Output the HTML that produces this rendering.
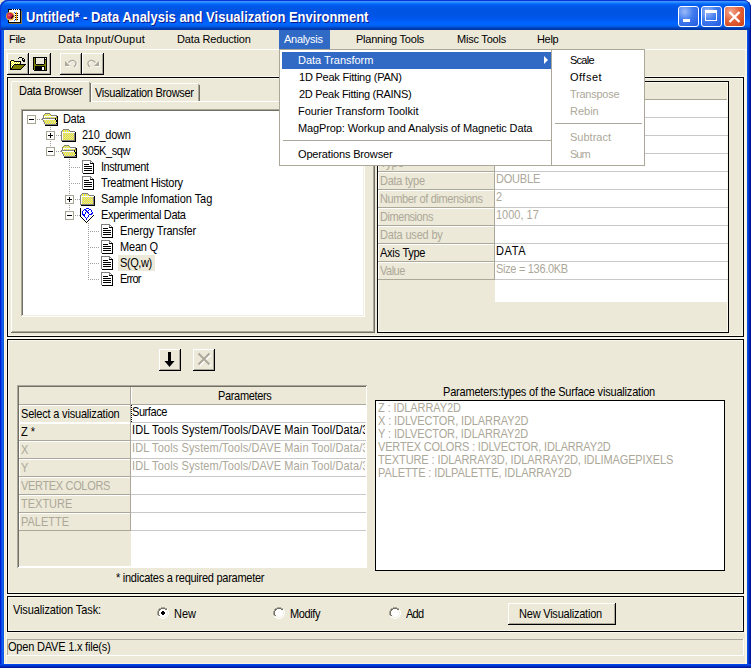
<!DOCTYPE html>
<html><head><meta charset="utf-8"><style>
*{margin:0;padding:0}
html,body{width:751px;height:668px;overflow:hidden;background:#fff}
.a{position:absolute}
.t{font-family:"Liberation Sans",sans-serif;font-size:11px;line-height:13px;white-space:pre}
</style></head>
<body>
<div class="a" style="left:0px;top:0px;width:12px;height:12px;background:#E4E1CF"></div>
<div class="a" style="left:0px;top:0px;width:751px;height:668px;background:#0B4FE0;border-radius:8px 8px 0 0;overflow:hidden"></div>
<div class="a" style="left:0px;top:0px;width:751px;height:30px;border-radius:8px 8px 0 0;box-shadow:inset 1px 1px 0 #0836D4,inset -1px 0 0 #001A9A;background:linear-gradient(to bottom,#0846DC 0px,#3D95FF 1px,#3A92FF 2px,#127DFF 3px,#0367F8 4px,#0059EA 6px,#0055E5 9px,#0054E3 14px,#0056EA 17px,#005BF3 20px,#0062FB 22px,#0066FF 24px,#0060F2 26px,#0052D8 27px,#0041B8 28px,#0033A0 30px)"></div>
<div class="a" style="left:0px;top:30px;width:4px;height:638px;background:linear-gradient(to right,#0019CF 0px,#0026D8 1px,#1A6CF0 2px,#0A56E4 3px,#0A56E4 4px)"></div>
<div class="a" style="left:747px;top:30px;width:4px;height:638px;background:linear-gradient(to right,#0A5AF0 0px,#0048E0 1px,#0030C0 2px,#001398 3px,#001398 4px)"></div>
<div class="a" style="left:0px;top:664px;width:751px;height:4px;background:linear-gradient(to bottom,#0A4CF0 0px,#0040E0 1px,#0028B8 2.5px,#001490 4px)"></div>
<div class="a" style="left:4px;top:30px;width:743px;height:634px;background:#ECE9D8"></div>
<div class="a" style="left:4px;top:663px;width:743px;height:1px;background:#FBF3DC"></div>
<div class="a" style="left:4px;top:30px;width:1px;height:634px;background:#FBF3DC"></div>
<div class="a" style="left:6px;top:49px;width:1px;height:614px;background:#F8F6E8"></div>
<div class="a" style="left:745px;top:49px;width:1px;height:614px;background:#F8F6E8"></div>
<div class="a" style="left:746px;top:30px;width:1px;height:634px;background:#FBF3DC"></div>
<svg class="a" style="left:6px;top:9px" width="17" height="16" viewBox="0 0 17 16">
<g shape-rendering="crispEdges">
<rect x="2" y="0" width="13" height="14" fill="#000"/><rect x="3" y="1" width="11" height="12" fill="#fff"/>
<rect x="6" y="0" width="1" height="1" fill="#fff"/><rect x="8" y="0" width="1" height="1" fill="#fff"/><rect x="10" y="0" width="1" height="1" fill="#fff"/><rect x="12" y="0" width="1" height="1" fill="#fff"/>
<rect x="15" y="2" width="1" height="13" fill="#8C7A4A"/><rect x="3" y="14" width="13" height="1" fill="#8C7A4A"/>
<rect x="10" y="3" width="1" height="9" fill="#F0A000"/>
<rect x="9" y="4" width="1" height="1" fill="#000"/><rect x="9" y="6" width="1" height="1" fill="#000"/><rect x="9" y="8" width="1" height="1" fill="#000"/><rect x="9" y="10" width="1" height="1" fill="#000"/>
<rect x="11" y="4" width="1" height="1" fill="#000"/><rect x="11" y="6" width="1" height="1" fill="#000"/><rect x="11" y="8" width="1" height="1" fill="#000"/><rect x="11" y="10" width="1" height="1" fill="#000"/>
<rect x="8" y="3" width="1" height="1" fill="#3070FF"/><rect x="8" y="11" width="1" height="1" fill="#3070FF"/>
</g>
<circle cx="4.3" cy="7.3" r="4.3" fill="#E8C040"/><circle cx="4" cy="7" r="3.3" fill="#D02848"/>
<path d="M5 9.5 L7.5 6.5" stroke="#400010" stroke-width="1.5"/><circle cx="2.8" cy="6.3" r="1" fill="#F06080"/>
</svg>
<div class="a" style="left:26px;top:11px;font:bold 13px 'Liberation Sans',sans-serif;line-height:13px;color:#fff;white-space:pre;text-shadow:1px 1px 0 #0A1A90;transform:scaleY(1.111);transform-origin:0 11px">Untitled* - Data Analysis and Visualization Environment</div>
<div class="a" style="left:678px;top:6px;width:21px;height:21px;background:radial-gradient(circle at 30% 25%,#9DBBF8 0%,#3F7BEF 45%,#2259E0 100%);border:1px solid #fff;box-sizing:border-box;border-radius:3px"></div>
<div class="a" style="left:701px;top:6px;width:21px;height:21px;background:radial-gradient(circle at 30% 25%,#9DBBF8 0%,#3F7BEF 45%,#2259E0 100%);border:1px solid #fff;box-sizing:border-box;border-radius:3px"></div>
<div class="a" style="left:724px;top:6px;width:21px;height:21px;background:radial-gradient(circle at 30% 25%,#F0A890 0%,#E5643C 45%,#CC3F14 100%);border:1px solid #fff;box-sizing:border-box;border-radius:3px"></div>
<div class="a" style="left:683px;top:19px;width:7px;height:3px;background:#fff"></div>
<div class="a" style="left:705px;top:10px;width:12px;height:11px;border:1px solid #fff;border-top-width:3px;box-sizing:border-box"></div>
<svg class="a" style="left:728px;top:11px" width="13" height="12" viewBox="0 0 13 12"><path d="M1.5 1 L11.5 11 M11.5 1 L1.5 11" stroke="#fff" stroke-width="2.3"/></svg>
<div class="a" style="left:4px;top:49px;width:743px;height:1px;background:#FFFFFF"></div>
<div class="a" style="left:279px;top:30px;width:51px;height:19px;background:#316AC5"></div>
<div class="a t" style="left:9px;top:33px;color:#000;letter-spacing:-0.333px;">File</div>
<div class="a t" style="left:58px;top:33px;color:#000;letter-spacing:0.200px;">Data Input/Ouput</div>
<div class="a t" style="left:177px;top:33px;color:#000;letter-spacing:-0.154px;">Data Reduction</div>
<div class="a t" style="left:356px;top:33px;color:#000;letter-spacing:-0.231px;">Planning Tools</div>
<div class="a t" style="left:457px;top:33px;color:#000;letter-spacing:-0.222px;">Misc Tools</div>
<div class="a t" style="left:537px;top:33px;color:#000;letter-spacing:-0.333px;">Help</div>
<div class="a t" style="left:284px;top:33px;color:#fff;letter-spacing:-0.286px;">Analysis</div>
<div class="a" style="left:7px;top:53px;width:22px;height:22px;background:#ECE9D8"></div>
<div class="a" style="left:7px;top:53px;width:22px;height:1px;background:#FFFFFF"></div>
<div class="a" style="left:7px;top:53px;width:1px;height:22px;background:#FFFFFF"></div>
<div class="a" style="left:8px;top:73px;width:20px;height:1px;background:#ACA899"></div>
<div class="a" style="left:27px;top:54px;width:1px;height:20px;background:#ACA899"></div>
<div class="a" style="left:7px;top:74px;width:22px;height:1px;background:#000"></div>
<div class="a" style="left:28px;top:53px;width:1px;height:22px;background:#000"></div>
<div class="a" style="left:29px;top:53px;width:22px;height:22px;background:#ECE9D8"></div>
<div class="a" style="left:29px;top:53px;width:22px;height:1px;background:#FFFFFF"></div>
<div class="a" style="left:29px;top:53px;width:1px;height:22px;background:#FFFFFF"></div>
<div class="a" style="left:30px;top:73px;width:20px;height:1px;background:#ACA899"></div>
<div class="a" style="left:49px;top:54px;width:1px;height:20px;background:#ACA899"></div>
<div class="a" style="left:29px;top:74px;width:22px;height:1px;background:#000"></div>
<div class="a" style="left:50px;top:53px;width:1px;height:22px;background:#000"></div>
<div class="a" style="left:60px;top:53px;width:22px;height:22px;background:#ECE9D8"></div>
<div class="a" style="left:60px;top:53px;width:22px;height:1px;background:#FFFFFF"></div>
<div class="a" style="left:60px;top:53px;width:1px;height:22px;background:#FFFFFF"></div>
<div class="a" style="left:61px;top:73px;width:20px;height:1px;background:#ACA899"></div>
<div class="a" style="left:80px;top:54px;width:1px;height:20px;background:#ACA899"></div>
<div class="a" style="left:60px;top:74px;width:22px;height:1px;background:#000"></div>
<div class="a" style="left:81px;top:53px;width:1px;height:22px;background:#000"></div>
<div class="a" style="left:82px;top:53px;width:22px;height:22px;background:#ECE9D8"></div>
<div class="a" style="left:82px;top:53px;width:22px;height:1px;background:#FFFFFF"></div>
<div class="a" style="left:82px;top:53px;width:1px;height:22px;background:#FFFFFF"></div>
<div class="a" style="left:83px;top:73px;width:20px;height:1px;background:#ACA899"></div>
<div class="a" style="left:102px;top:54px;width:1px;height:20px;background:#ACA899"></div>
<div class="a" style="left:82px;top:74px;width:22px;height:1px;background:#000"></div>
<div class="a" style="left:103px;top:53px;width:1px;height:22px;background:#000"></div>
<svg class="a" style="left:10px;top:57px" width="16" height="13" shape-rendering="crispEdges"><rect x="9" y="0" width="3" height="1" fill="#000000"/><rect x="8" y="1" width="1" height="1" fill="#000000"/><rect x="12" y="1" width="2" height="1" fill="#000000"/><rect x="12" y="2" width="1" height="1" fill="#000000"/><rect x="14" y="2" width="1" height="1" fill="#000000"/><rect x="1" y="3" width="3" height="1" fill="#000000"/><rect x="12" y="3" width="3" height="1" fill="#000000"/><rect x="0" y="4" width="1" height="1" fill="#000000"/><rect x="1" y="4" width="1" height="1" fill="#FFFF00"/><rect x="2" y="4" width="1" height="1" fill="#FFFFFF"/><rect x="3" y="4" width="1" height="1" fill="#FFFF00"/><rect x="4" y="4" width="7" height="1" fill="#000000"/><rect x="13" y="4" width="2" height="1" fill="#000000"/><rect x="0" y="5" width="1" height="1" fill="#000000"/><rect x="1" y="5" width="1" height="1" fill="#FFFFFF"/><rect x="2" y="5" width="1" height="1" fill="#FFFF00"/><rect x="3" y="5" width="1" height="1" fill="#FFFFFF"/><rect x="4" y="5" width="1" height="1" fill="#FFFF00"/><rect x="5" y="5" width="1" height="1" fill="#FFFFFF"/><rect x="6" y="5" width="1" height="1" fill="#FFFF00"/><rect x="7" y="5" width="1" height="1" fill="#FFFFFF"/><rect x="8" y="5" width="1" height="1" fill="#FFFF00"/><rect x="9" y="5" width="1" height="1" fill="#FFFFFF"/><rect x="10" y="5" width="1" height="1" fill="#000000"/><rect x="0" y="6" width="1" height="1" fill="#000000"/><rect x="1" y="6" width="1" height="1" fill="#FFFF00"/><rect x="2" y="6" width="1" height="1" fill="#FFFFFF"/><rect x="3" y="6" width="1" height="1" fill="#FFFF00"/><rect x="4" y="6" width="1" height="1" fill="#FFFFFF"/><rect x="5" y="6" width="1" height="1" fill="#FFFF00"/><rect x="6" y="6" width="1" height="1" fill="#FFFFFF"/><rect x="7" y="6" width="1" height="1" fill="#FFFF00"/><rect x="8" y="6" width="1" height="1" fill="#FFFFFF"/><rect x="9" y="6" width="1" height="1" fill="#FFFF00"/><rect x="10" y="6" width="1" height="1" fill="#000000"/><rect x="0" y="7" width="1" height="1" fill="#000000"/><rect x="1" y="7" width="1" height="1" fill="#FFFFFF"/><rect x="2" y="7" width="1" height="1" fill="#FFFF00"/><rect x="3" y="7" width="1" height="1" fill="#FFFFFF"/><rect x="4" y="7" width="12" height="1" fill="#000000"/><rect x="0" y="8" width="1" height="1" fill="#000000"/><rect x="1" y="8" width="1" height="1" fill="#FFFF00"/><rect x="2" y="8" width="1" height="1" fill="#FFFFFF"/><rect x="3" y="8" width="1" height="1" fill="#000000"/><rect x="4" y="8" width="10" height="1" fill="#808000"/><rect x="14" y="8" width="1" height="1" fill="#000000"/><rect x="0" y="9" width="1" height="1" fill="#000000"/><rect x="1" y="9" width="1" height="1" fill="#FFFFFF"/><rect x="2" y="9" width="1" height="1" fill="#000000"/><rect x="3" y="9" width="10" height="1" fill="#808000"/><rect x="13" y="9" width="1" height="1" fill="#000000"/><rect x="0" y="10" width="1" height="1" fill="#000000"/><rect x="1" y="10" width="1" height="1" fill="#FFFF00"/><rect x="2" y="10" width="1" height="1" fill="#000000"/><rect x="3" y="10" width="9" height="1" fill="#808000"/><rect x="12" y="10" width="1" height="1" fill="#000000"/><rect x="0" y="11" width="2" height="1" fill="#000000"/><rect x="2" y="11" width="9" height="1" fill="#808000"/><rect x="11" y="11" width="1" height="1" fill="#000000"/><rect x="0" y="12" width="11" height="1" fill="#000000"/></svg>
<svg class="a" style="left:33px;top:57px" width="14" height="14" shape-rendering="crispEdges"><rect x="0" y="0" width="14" height="1" fill="#000000"/><rect x="0" y="1" width="1" height="1" fill="#000000"/><rect x="1" y="1" width="1" height="1" fill="#808000"/><rect x="2" y="1" width="1" height="1" fill="#000000"/><rect x="3" y="1" width="1" height="1" fill="#FFFFFF"/><rect x="4" y="1" width="6" height="1" fill="#ECE9D8"/><rect x="10" y="1" width="1" height="1" fill="#FFFFFF"/><rect x="11" y="1" width="1" height="1" fill="#000000"/><rect x="12" y="1" width="1" height="1" fill="#FFFFFF"/><rect x="13" y="1" width="1" height="1" fill="#000000"/><rect x="0" y="2" width="1" height="1" fill="#000000"/><rect x="1" y="2" width="1" height="1" fill="#808000"/><rect x="2" y="2" width="1" height="1" fill="#000000"/><rect x="3" y="2" width="8" height="1" fill="#ECE9D8"/><rect x="11" y="2" width="3" height="1" fill="#000000"/><rect x="0" y="3" width="1" height="1" fill="#000000"/><rect x="1" y="3" width="1" height="1" fill="#808000"/><rect x="2" y="3" width="1" height="1" fill="#000000"/><rect x="3" y="3" width="8" height="1" fill="#ECE9D8"/><rect x="11" y="3" width="1" height="1" fill="#000000"/><rect x="12" y="3" width="1" height="1" fill="#808000"/><rect x="13" y="3" width="1" height="1" fill="#000000"/><rect x="0" y="4" width="1" height="1" fill="#000000"/><rect x="1" y="4" width="1" height="1" fill="#808000"/><rect x="2" y="4" width="1" height="1" fill="#000000"/><rect x="3" y="4" width="8" height="1" fill="#ECE9D8"/><rect x="11" y="4" width="1" height="1" fill="#000000"/><rect x="12" y="4" width="1" height="1" fill="#808000"/><rect x="13" y="4" width="1" height="1" fill="#000000"/><rect x="0" y="5" width="1" height="1" fill="#000000"/><rect x="1" y="5" width="1" height="1" fill="#808000"/><rect x="2" y="5" width="1" height="1" fill="#000000"/><rect x="3" y="5" width="8" height="1" fill="#ECE9D8"/><rect x="11" y="5" width="1" height="1" fill="#000000"/><rect x="12" y="5" width="1" height="1" fill="#808000"/><rect x="13" y="5" width="1" height="1" fill="#000000"/><rect x="0" y="6" width="1" height="1" fill="#000000"/><rect x="1" y="6" width="1" height="1" fill="#808000"/><rect x="2" y="6" width="1" height="1" fill="#000000"/><rect x="3" y="6" width="1" height="1" fill="#FFFFFF"/><rect x="4" y="6" width="6" height="1" fill="#ECE9D8"/><rect x="10" y="6" width="1" height="1" fill="#FFFFFF"/><rect x="11" y="6" width="1" height="1" fill="#000000"/><rect x="12" y="6" width="1" height="1" fill="#808000"/><rect x="13" y="6" width="1" height="1" fill="#000000"/><rect x="0" y="7" width="1" height="1" fill="#000000"/><rect x="1" y="7" width="2" height="1" fill="#808000"/><rect x="3" y="7" width="8" height="1" fill="#000000"/><rect x="11" y="7" width="2" height="1" fill="#808000"/><rect x="13" y="7" width="1" height="1" fill="#000000"/><rect x="0" y="8" width="1" height="1" fill="#000000"/><rect x="1" y="8" width="12" height="1" fill="#808000"/><rect x="13" y="8" width="1" height="1" fill="#000000"/><rect x="0" y="9" width="1" height="1" fill="#000000"/><rect x="1" y="9" width="1" height="1" fill="#808000"/><rect x="2" y="9" width="10" height="1" fill="#000000"/><rect x="12" y="9" width="1" height="1" fill="#808000"/><rect x="13" y="9" width="1" height="1" fill="#000000"/><rect x="0" y="10" width="1" height="1" fill="#000000"/><rect x="1" y="10" width="1" height="1" fill="#808000"/><rect x="2" y="10" width="7" height="1" fill="#000000"/><rect x="9" y="10" width="2" height="1" fill="#FFFFFF"/><rect x="11" y="10" width="1" height="1" fill="#000000"/><rect x="12" y="10" width="1" height="1" fill="#808000"/><rect x="13" y="10" width="1" height="1" fill="#000000"/><rect x="0" y="11" width="1" height="1" fill="#000000"/><rect x="1" y="11" width="1" height="1" fill="#808000"/><rect x="2" y="11" width="7" height="1" fill="#000000"/><rect x="9" y="11" width="2" height="1" fill="#FFFFFF"/><rect x="11" y="11" width="1" height="1" fill="#000000"/><rect x="12" y="11" width="1" height="1" fill="#808000"/><rect x="13" y="11" width="1" height="1" fill="#000000"/><rect x="0" y="12" width="1" height="1" fill="#000000"/><rect x="1" y="12" width="1" height="1" fill="#808000"/><rect x="2" y="12" width="7" height="1" fill="#000000"/><rect x="9" y="12" width="2" height="1" fill="#FFFFFF"/><rect x="11" y="12" width="1" height="1" fill="#000000"/><rect x="12" y="12" width="1" height="1" fill="#808000"/><rect x="13" y="12" width="1" height="1" fill="#000000"/><rect x="0" y="13" width="1" height="1" fill="#FFFFFF"/><rect x="1" y="13" width="13" height="1" fill="#000000"/></svg>
<svg class="a" style="left:64px;top:59px" width="15" height="11" viewBox="0 0 15 11"><g transform="translate(0.7,0.7)"><path d="M1 2 L1 7 L6 7 Z" fill="#fff"/><path d="M4.5 3.5 Q7 1 9.5 1.5 Q12.5 2.5 12 5 Q11.5 7 10 8" stroke="#fff" stroke-width="1.3" fill="none"/></g><path d="M1 2 L1 7 L6 7 Z" fill="#ACA899"/><path d="M4.5 3.5 Q7 1 9.5 1.5 Q12.5 2.5 12 5 Q11.5 7 10 8" stroke="#ACA899" stroke-width="1.3" fill="none"/></svg>
<svg class="a" style="left:86px;top:59px" width="15" height="11" viewBox="0 0 15 11"><g transform="translate(14,0) scale(-1,1)"><g transform="translate(-0.7,0.7)"><path d="M1 2 L1 7 L6 7 Z" fill="#fff"/><path d="M4.5 3.5 Q7 1 9.5 1.5 Q12.5 2.5 12 5 Q11.5 7 10 8" stroke="#fff" stroke-width="1.3" fill="none"/></g><path d="M1 2 L1 7 L6 7 Z" fill="#ACA899"/><path d="M4.5 3.5 Q7 1 9.5 1.5 Q12.5 2.5 12 5 Q11.5 7 10 8" stroke="#ACA899" stroke-width="1.3" fill="none"/></g></svg>
<div class="a" style="left:6px;top:76px;width:739px;height:262px;border:1px solid #FAF8EC;box-sizing:border-box"></div>
<div class="a" style="left:7px;top:77px;width:737px;height:260px;border:1px solid #000;box-sizing:border-box"></div>
<div class="a" style="left:8px;top:78px;width:735px;height:258px;border:1px solid #F8F6EA;box-sizing:border-box"></div>
<div class="a" style="left:11px;top:101px;width:364px;height:1px;background:#FFFFFF"></div>
<div class="a" style="left:11px;top:101px;width:1px;height:232px;background:#FFFFFF"></div>
<div class="a" style="left:12px;top:331px;width:362px;height:1px;background:#ACA899"></div>
<div class="a" style="left:373px;top:102px;width:1px;height:230px;background:#ACA899"></div>
<div class="a" style="left:11px;top:332px;width:364px;height:1px;background:#716F64"></div>
<div class="a" style="left:374px;top:101px;width:1px;height:232px;background:#716F64"></div>
<div class="a" style="left:91px;top:83px;width:108px;height:18px;background:#ECE9D8"></div>
<div class="a" style="left:92px;top:83px;width:106px;height:1px;background:#FFFFFF"></div>
<div class="a" style="left:91px;top:84px;width:1px;height:17px;background:#FFFFFF"></div>
<div class="a" style="left:198px;top:84px;width:1px;height:17px;background:#ACA899"></div>
<div class="a" style="left:199px;top:85px;width:1px;height:16px;background:#716F64"></div>
<div class="a t" style="left:95px;top:87px;color:#000;transform:scaleY(1.125);transform-origin:0 10px;letter-spacing:-0.300px;">Visualization Browser</div>
<div class="a" style="left:11px;top:81px;width:80px;height:21px;background:#ECE9D8"></div>
<div class="a" style="left:12px;top:81px;width:77px;height:1px;background:#FFFFFF"></div>
<div class="a" style="left:11px;top:82px;width:1px;height:20px;background:#FFFFFF"></div>
<div class="a" style="left:89px;top:82px;width:1px;height:20px;background:#ACA899"></div>
<div class="a" style="left:90px;top:83px;width:1px;height:19px;background:#716F64"></div>
<div class="a t" style="left:19px;top:85px;color:#000;transform:scaleY(1.125);transform-origin:0 10px;letter-spacing:-0.273px;">Data Browser</div>
<div class="a" style="left:21px;top:109px;width:344px;height:208px;background:#FFFFFF"></div>
<div class="a" style="left:21px;top:109px;width:344px;height:1px;background:#ACA899"></div>
<div class="a" style="left:21px;top:109px;width:1px;height:208px;background:#ACA899"></div>
<div class="a" style="left:22px;top:110px;width:342px;height:1px;background:#716F64"></div>
<div class="a" style="left:22px;top:110px;width:1px;height:206px;background:#716F64"></div>
<div class="a" style="left:21px;top:316px;width:344px;height:1px;background:#FFFFFF"></div>
<div class="a" style="left:364px;top:109px;width:1px;height:208px;background:#FFFFFF"></div>
<div class="a" style="left:22px;top:315px;width:342px;height:1px;background:#F1EFE2"></div>
<div class="a" style="left:363px;top:110px;width:1px;height:206px;background:#F1EFE2"></div>
<svg width="0" height="0" style="position:absolute"><defs><pattern id="dith" width="2" height="2" patternUnits="userSpaceOnUse"><rect width="2" height="2" fill="#FFFF00"/><rect width="1" height="1" fill="#E8E8C0"/><rect x="1" y="1" width="1" height="1" fill="#E8E8C0"/></pattern></defs></svg>
<div class="a" style="left:50px;top:127px;width:1px;height:25px;background:repeating-linear-gradient(to bottom,#A0A0A0 0 1px,transparent 1px 2px)"></div>
<div class="a" style="left:69px;top:159px;width:1px;height:57px;background:repeating-linear-gradient(to bottom,#A0A0A0 0 1px,transparent 1px 2px)"></div>
<div class="a" style="left:88px;top:223px;width:1px;height:57px;background:repeating-linear-gradient(to bottom,#A0A0A0 0 1px,transparent 1px 2px)"></div>
<div class="a" style="left:37px;top:119px;width:5px;height:1px;background:repeating-linear-gradient(to right,#A0A0A0 0 1px,transparent 1px 2px)"></div>
<div class="a" style="left:27px;top:115px;width:9px;height:9px;border:1px solid #A8A593;box-sizing:border-box;background:#fff"></div>
<div class="a" style="left:29px;top:119px;width:5px;height:1px;background:#000"></div>
<svg class="a" style="left:42px;top:113px" width="16" height="13" shape-rendering="crispEdges"><rect x="3" y="0" width="5" height="1" fill="#808080"/><rect x="2" y="1" width="1" height="1" fill="#808080"/><rect x="3" y="1" width="1" height="1" fill="#FFFF00"/><rect x="4" y="1" width="1" height="1" fill="#C8C8D0"/><rect x="5" y="1" width="1" height="1" fill="#FFFF00"/><rect x="6" y="1" width="1" height="1" fill="#C8C8D0"/><rect x="7" y="1" width="1" height="1" fill="#FFFF00"/><rect x="8" y="1" width="1" height="1" fill="#808080"/><rect x="1" y="2" width="1" height="1" fill="#808080"/><rect x="2" y="2" width="1" height="1" fill="#FFFF00"/><rect x="3" y="2" width="1" height="1" fill="#C8C8D0"/><rect x="4" y="2" width="1" height="1" fill="#FFFF00"/><rect x="5" y="2" width="1" height="1" fill="#C8C8D0"/><rect x="6" y="2" width="1" height="1" fill="#FFFF00"/><rect x="7" y="2" width="1" height="1" fill="#C8C8D0"/><rect x="8" y="2" width="1" height="1" fill="#FFFF00"/><rect x="9" y="2" width="6" height="1" fill="#808080"/><rect x="1" y="3" width="1" height="1" fill="#808080"/><rect x="2" y="3" width="12" height="1" fill="#FFFFFF"/><rect x="14" y="3" width="1" height="1" fill="#808080"/><rect x="15" y="3" width="1" height="1" fill="#000000"/><rect x="1" y="4" width="1" height="1" fill="#808080"/><rect x="2" y="4" width="1" height="1" fill="#FFFFFF"/><rect x="3" y="4" width="1" height="1" fill="#FFFF00"/><rect x="4" y="4" width="1" height="1" fill="#C8C8D0"/><rect x="5" y="4" width="1" height="1" fill="#FFFF00"/><rect x="6" y="4" width="1" height="1" fill="#C8C8D0"/><rect x="7" y="4" width="1" height="1" fill="#FFFF00"/><rect x="8" y="4" width="1" height="1" fill="#C8C8D0"/><rect x="9" y="4" width="1" height="1" fill="#FFFF00"/><rect x="10" y="4" width="1" height="1" fill="#C8C8D0"/><rect x="11" y="4" width="1" height="1" fill="#FFFF00"/><rect x="12" y="4" width="1" height="1" fill="#C8C8D0"/><rect x="13" y="4" width="1" height="1" fill="#FFFF00"/><rect x="14" y="4" width="1" height="1" fill="#808080"/><rect x="15" y="4" width="1" height="1" fill="#000000"/><rect x="0" y="5" width="13" height="1" fill="#808080"/><rect x="13" y="5" width="1" height="1" fill="#000000"/><rect x="14" y="5" width="1" height="1" fill="#FFFF00"/><rect x="15" y="5" width="1" height="1" fill="#000000"/><rect x="0" y="6" width="1" height="1" fill="#808080"/><rect x="1" y="6" width="12" height="1" fill="#FFFFFF"/><rect x="13" y="6" width="1" height="1" fill="#000000"/><rect x="14" y="6" width="1" height="1" fill="#C8C8D0"/><rect x="15" y="6" width="1" height="1" fill="#000000"/><rect x="1" y="7" width="1" height="1" fill="#808080"/><rect x="2" y="7" width="1" height="1" fill="#FFFF00"/><rect x="3" y="7" width="1" height="1" fill="#C8C8D0"/><rect x="4" y="7" width="1" height="1" fill="#FFFF00"/><rect x="5" y="7" width="1" height="1" fill="#C8C8D0"/><rect x="6" y="7" width="1" height="1" fill="#FFFF00"/><rect x="7" y="7" width="1" height="1" fill="#C8C8D0"/><rect x="8" y="7" width="1" height="1" fill="#FFFF00"/><rect x="9" y="7" width="1" height="1" fill="#C8C8D0"/><rect x="10" y="7" width="1" height="1" fill="#FFFF00"/><rect x="11" y="7" width="1" height="1" fill="#C8C8D0"/><rect x="12" y="7" width="1" height="1" fill="#FFFF00"/><rect x="13" y="7" width="1" height="1" fill="#C8C8D0"/><rect x="14" y="7" width="2" height="1" fill="#000000"/><rect x="1" y="8" width="1" height="1" fill="#808080"/><rect x="2" y="8" width="1" height="1" fill="#C8C8D0"/><rect x="3" y="8" width="1" height="1" fill="#FFFF00"/><rect x="4" y="8" width="1" height="1" fill="#C8C8D0"/><rect x="5" y="8" width="1" height="1" fill="#FFFF00"/><rect x="6" y="8" width="1" height="1" fill="#C8C8D0"/><rect x="7" y="8" width="1" height="1" fill="#FFFF00"/><rect x="8" y="8" width="1" height="1" fill="#C8C8D0"/><rect x="9" y="8" width="1" height="1" fill="#FFFF00"/><rect x="10" y="8" width="1" height="1" fill="#C8C8D0"/><rect x="11" y="8" width="1" height="1" fill="#FFFF00"/><rect x="12" y="8" width="1" height="1" fill="#C8C8D0"/><rect x="13" y="8" width="1" height="1" fill="#FFFF00"/><rect x="14" y="8" width="2" height="1" fill="#000000"/><rect x="2" y="9" width="1" height="1" fill="#808080"/><rect x="3" y="9" width="1" height="1" fill="#FFFF00"/><rect x="4" y="9" width="1" height="1" fill="#C8C8D0"/><rect x="5" y="9" width="1" height="1" fill="#FFFF00"/><rect x="6" y="9" width="1" height="1" fill="#C8C8D0"/><rect x="7" y="9" width="1" height="1" fill="#FFFF00"/><rect x="8" y="9" width="1" height="1" fill="#C8C8D0"/><rect x="9" y="9" width="1" height="1" fill="#FFFF00"/><rect x="10" y="9" width="1" height="1" fill="#C8C8D0"/><rect x="11" y="9" width="1" height="1" fill="#FFFF00"/><rect x="12" y="9" width="1" height="1" fill="#C8C8D0"/><rect x="13" y="9" width="1" height="1" fill="#FFFF00"/><rect x="14" y="9" width="1" height="1" fill="#C8C8D0"/><rect x="15" y="9" width="1" height="1" fill="#000000"/><rect x="2" y="10" width="1" height="1" fill="#808080"/><rect x="3" y="10" width="1" height="1" fill="#C8C8D0"/><rect x="4" y="10" width="1" height="1" fill="#FFFF00"/><rect x="5" y="10" width="1" height="1" fill="#C8C8D0"/><rect x="6" y="10" width="1" height="1" fill="#FFFF00"/><rect x="7" y="10" width="1" height="1" fill="#C8C8D0"/><rect x="8" y="10" width="1" height="1" fill="#FFFF00"/><rect x="9" y="10" width="1" height="1" fill="#C8C8D0"/><rect x="10" y="10" width="1" height="1" fill="#FFFF00"/><rect x="11" y="10" width="1" height="1" fill="#C8C8D0"/><rect x="12" y="10" width="1" height="1" fill="#FFFF00"/><rect x="13" y="10" width="1" height="1" fill="#C8C8D0"/><rect x="14" y="10" width="2" height="1" fill="#000000"/><rect x="3" y="11" width="12" height="1" fill="#808080"/><rect x="15" y="11" width="1" height="1" fill="#000000"/><rect x="3" y="12" width="13" height="1" fill="#000000"/></svg>
<div class="a t" style="left:63px;top:113px;color:#000;transform:scaleY(1.125);transform-origin:0 10px;letter-spacing:-0.333px;">Data</div>
<div class="a" style="left:56px;top:135px;width:5px;height:1px;background:repeating-linear-gradient(to right,#A0A0A0 0 1px,transparent 1px 2px)"></div>
<div class="a" style="left:46px;top:131px;width:9px;height:9px;border:1px solid #A8A593;box-sizing:border-box;background:#fff"></div>
<div class="a" style="left:48px;top:135px;width:5px;height:1px;background:#000"></div>
<div class="a" style="left:50px;top:133px;width:1px;height:5px;background:#000"></div>
<svg class="a" style="left:61px;top:129px" width="15" height="13" shape-rendering="crispEdges"><rect x="2" y="0" width="6" height="1" fill="#808080"/><rect x="1" y="1" width="1" height="1" fill="#808080"/><rect x="2" y="1" width="1" height="1" fill="#FFFF00"/><rect x="3" y="1" width="1" height="1" fill="#C8C8D0"/><rect x="4" y="1" width="1" height="1" fill="#FFFF00"/><rect x="5" y="1" width="1" height="1" fill="#C8C8D0"/><rect x="6" y="1" width="1" height="1" fill="#FFFF00"/><rect x="7" y="1" width="1" height="1" fill="#C8C8D0"/><rect x="8" y="1" width="1" height="1" fill="#808080"/><rect x="0" y="2" width="1" height="1" fill="#808080"/><rect x="1" y="2" width="1" height="1" fill="#C8C8D0"/><rect x="2" y="2" width="1" height="1" fill="#FFFF00"/><rect x="3" y="2" width="1" height="1" fill="#C8C8D0"/><rect x="4" y="2" width="1" height="1" fill="#FFFF00"/><rect x="5" y="2" width="1" height="1" fill="#C8C8D0"/><rect x="6" y="2" width="1" height="1" fill="#FFFF00"/><rect x="7" y="2" width="1" height="1" fill="#C8C8D0"/><rect x="8" y="2" width="1" height="1" fill="#FFFF00"/><rect x="9" y="2" width="5" height="1" fill="#808080"/><rect x="0" y="3" width="1" height="1" fill="#808080"/><rect x="1" y="3" width="13" height="1" fill="#FFFFFF"/><rect x="14" y="3" width="1" height="1" fill="#000000"/><rect x="0" y="4" width="1" height="1" fill="#808080"/><rect x="1" y="4" width="1" height="1" fill="#FFFFFF"/><rect x="2" y="4" width="1" height="1" fill="#FFFF00"/><rect x="3" y="4" width="1" height="1" fill="#C8C8D0"/><rect x="4" y="4" width="1" height="1" fill="#FFFF00"/><rect x="5" y="4" width="1" height="1" fill="#C8C8D0"/><rect x="6" y="4" width="1" height="1" fill="#FFFF00"/><rect x="7" y="4" width="1" height="1" fill="#C8C8D0"/><rect x="8" y="4" width="1" height="1" fill="#FFFF00"/><rect x="9" y="4" width="1" height="1" fill="#C8C8D0"/><rect x="10" y="4" width="1" height="1" fill="#FFFF00"/><rect x="11" y="4" width="1" height="1" fill="#C8C8D0"/><rect x="12" y="4" width="1" height="1" fill="#FFFF00"/><rect x="13" y="4" width="1" height="1" fill="#808080"/><rect x="14" y="4" width="1" height="1" fill="#000000"/><rect x="0" y="5" width="1" height="1" fill="#808080"/><rect x="1" y="5" width="1" height="1" fill="#FFFFFF"/><rect x="2" y="5" width="1" height="1" fill="#C8C8D0"/><rect x="3" y="5" width="1" height="1" fill="#FFFF00"/><rect x="4" y="5" width="1" height="1" fill="#C8C8D0"/><rect x="5" y="5" width="1" height="1" fill="#FFFF00"/><rect x="6" y="5" width="1" height="1" fill="#C8C8D0"/><rect x="7" y="5" width="1" height="1" fill="#FFFF00"/><rect x="8" y="5" width="1" height="1" fill="#C8C8D0"/><rect x="9" y="5" width="1" height="1" fill="#FFFF00"/><rect x="10" y="5" width="1" height="1" fill="#C8C8D0"/><rect x="11" y="5" width="1" height="1" fill="#FFFF00"/><rect x="12" y="5" width="1" height="1" fill="#C8C8D0"/><rect x="13" y="5" width="1" height="1" fill="#808080"/><rect x="14" y="5" width="1" height="1" fill="#000000"/><rect x="0" y="6" width="1" height="1" fill="#808080"/><rect x="1" y="6" width="1" height="1" fill="#FFFFFF"/><rect x="2" y="6" width="1" height="1" fill="#FFFF00"/><rect x="3" y="6" width="1" height="1" fill="#C8C8D0"/><rect x="4" y="6" width="1" height="1" fill="#FFFF00"/><rect x="5" y="6" width="1" height="1" fill="#C8C8D0"/><rect x="6" y="6" width="1" height="1" fill="#FFFF00"/><rect x="7" y="6" width="1" height="1" fill="#C8C8D0"/><rect x="8" y="6" width="1" height="1" fill="#FFFF00"/><rect x="9" y="6" width="1" height="1" fill="#C8C8D0"/><rect x="10" y="6" width="1" height="1" fill="#FFFF00"/><rect x="11" y="6" width="1" height="1" fill="#C8C8D0"/><rect x="12" y="6" width="1" height="1" fill="#FFFF00"/><rect x="13" y="6" width="1" height="1" fill="#808080"/><rect x="14" y="6" width="1" height="1" fill="#000000"/><rect x="0" y="7" width="1" height="1" fill="#808080"/><rect x="1" y="7" width="1" height="1" fill="#FFFFFF"/><rect x="2" y="7" width="1" height="1" fill="#C8C8D0"/><rect x="3" y="7" width="1" height="1" fill="#FFFF00"/><rect x="4" y="7" width="1" height="1" fill="#C8C8D0"/><rect x="5" y="7" width="1" height="1" fill="#FFFF00"/><rect x="6" y="7" width="1" height="1" fill="#C8C8D0"/><rect x="7" y="7" width="1" height="1" fill="#FFFF00"/><rect x="8" y="7" width="1" height="1" fill="#C8C8D0"/><rect x="9" y="7" width="1" height="1" fill="#FFFF00"/><rect x="10" y="7" width="1" height="1" fill="#C8C8D0"/><rect x="11" y="7" width="1" height="1" fill="#FFFF00"/><rect x="12" y="7" width="1" height="1" fill="#C8C8D0"/><rect x="13" y="7" width="1" height="1" fill="#808080"/><rect x="14" y="7" width="1" height="1" fill="#000000"/><rect x="0" y="8" width="1" height="1" fill="#808080"/><rect x="1" y="8" width="1" height="1" fill="#FFFFFF"/><rect x="2" y="8" width="1" height="1" fill="#FFFF00"/><rect x="3" y="8" width="1" height="1" fill="#C8C8D0"/><rect x="4" y="8" width="1" height="1" fill="#FFFF00"/><rect x="5" y="8" width="1" height="1" fill="#C8C8D0"/><rect x="6" y="8" width="1" height="1" fill="#FFFF00"/><rect x="7" y="8" width="1" height="1" fill="#C8C8D0"/><rect x="8" y="8" width="1" height="1" fill="#FFFF00"/><rect x="9" y="8" width="1" height="1" fill="#C8C8D0"/><rect x="10" y="8" width="1" height="1" fill="#FFFF00"/><rect x="11" y="8" width="1" height="1" fill="#C8C8D0"/><rect x="12" y="8" width="1" height="1" fill="#FFFF00"/><rect x="13" y="8" width="1" height="1" fill="#808080"/><rect x="14" y="8" width="1" height="1" fill="#000000"/><rect x="0" y="9" width="1" height="1" fill="#808080"/><rect x="1" y="9" width="1" height="1" fill="#FFFFFF"/><rect x="2" y="9" width="1" height="1" fill="#C8C8D0"/><rect x="3" y="9" width="1" height="1" fill="#FFFF00"/><rect x="4" y="9" width="1" height="1" fill="#C8C8D0"/><rect x="5" y="9" width="1" height="1" fill="#FFFF00"/><rect x="6" y="9" width="1" height="1" fill="#C8C8D0"/><rect x="7" y="9" width="1" height="1" fill="#FFFF00"/><rect x="8" y="9" width="1" height="1" fill="#C8C8D0"/><rect x="9" y="9" width="1" height="1" fill="#FFFF00"/><rect x="10" y="9" width="1" height="1" fill="#C8C8D0"/><rect x="11" y="9" width="1" height="1" fill="#FFFF00"/><rect x="12" y="9" width="1" height="1" fill="#C8C8D0"/><rect x="13" y="9" width="1" height="1" fill="#808080"/><rect x="14" y="9" width="1" height="1" fill="#000000"/><rect x="0" y="10" width="1" height="1" fill="#808080"/><rect x="1" y="10" width="1" height="1" fill="#FFFFFF"/><rect x="2" y="10" width="1" height="1" fill="#FFFF00"/><rect x="3" y="10" width="1" height="1" fill="#C8C8D0"/><rect x="4" y="10" width="1" height="1" fill="#FFFF00"/><rect x="5" y="10" width="1" height="1" fill="#C8C8D0"/><rect x="6" y="10" width="1" height="1" fill="#FFFF00"/><rect x="7" y="10" width="1" height="1" fill="#C8C8D0"/><rect x="8" y="10" width="1" height="1" fill="#FFFF00"/><rect x="9" y="10" width="1" height="1" fill="#C8C8D0"/><rect x="10" y="10" width="1" height="1" fill="#FFFF00"/><rect x="11" y="10" width="1" height="1" fill="#C8C8D0"/><rect x="12" y="10" width="1" height="1" fill="#FFFF00"/><rect x="13" y="10" width="1" height="1" fill="#808080"/><rect x="14" y="10" width="1" height="1" fill="#000000"/><rect x="0" y="11" width="14" height="1" fill="#808080"/><rect x="14" y="11" width="1" height="1" fill="#000000"/><rect x="1" y="12" width="14" height="1" fill="#000000"/></svg>
<div class="a t" style="left:82px;top:129px;color:#000;transform:scaleY(1.125);transform-origin:0 10px;letter-spacing:-0.286px;">210_down</div>
<div class="a" style="left:56px;top:151px;width:5px;height:1px;background:repeating-linear-gradient(to right,#A0A0A0 0 1px,transparent 1px 2px)"></div>
<div class="a" style="left:46px;top:147px;width:9px;height:9px;border:1px solid #A8A593;box-sizing:border-box;background:#fff"></div>
<div class="a" style="left:48px;top:151px;width:5px;height:1px;background:#000"></div>
<svg class="a" style="left:61px;top:145px" width="16" height="13" shape-rendering="crispEdges"><rect x="3" y="0" width="5" height="1" fill="#808080"/><rect x="2" y="1" width="1" height="1" fill="#808080"/><rect x="3" y="1" width="1" height="1" fill="#FFFF00"/><rect x="4" y="1" width="1" height="1" fill="#C8C8D0"/><rect x="5" y="1" width="1" height="1" fill="#FFFF00"/><rect x="6" y="1" width="1" height="1" fill="#C8C8D0"/><rect x="7" y="1" width="1" height="1" fill="#FFFF00"/><rect x="8" y="1" width="1" height="1" fill="#808080"/><rect x="1" y="2" width="1" height="1" fill="#808080"/><rect x="2" y="2" width="1" height="1" fill="#FFFF00"/><rect x="3" y="2" width="1" height="1" fill="#C8C8D0"/><rect x="4" y="2" width="1" height="1" fill="#FFFF00"/><rect x="5" y="2" width="1" height="1" fill="#C8C8D0"/><rect x="6" y="2" width="1" height="1" fill="#FFFF00"/><rect x="7" y="2" width="1" height="1" fill="#C8C8D0"/><rect x="8" y="2" width="1" height="1" fill="#FFFF00"/><rect x="9" y="2" width="6" height="1" fill="#808080"/><rect x="1" y="3" width="1" height="1" fill="#808080"/><rect x="2" y="3" width="12" height="1" fill="#FFFFFF"/><rect x="14" y="3" width="1" height="1" fill="#808080"/><rect x="15" y="3" width="1" height="1" fill="#000000"/><rect x="1" y="4" width="1" height="1" fill="#808080"/><rect x="2" y="4" width="1" height="1" fill="#FFFFFF"/><rect x="3" y="4" width="1" height="1" fill="#FFFF00"/><rect x="4" y="4" width="1" height="1" fill="#C8C8D0"/><rect x="5" y="4" width="1" height="1" fill="#FFFF00"/><rect x="6" y="4" width="1" height="1" fill="#C8C8D0"/><rect x="7" y="4" width="1" height="1" fill="#FFFF00"/><rect x="8" y="4" width="1" height="1" fill="#C8C8D0"/><rect x="9" y="4" width="1" height="1" fill="#FFFF00"/><rect x="10" y="4" width="1" height="1" fill="#C8C8D0"/><rect x="11" y="4" width="1" height="1" fill="#FFFF00"/><rect x="12" y="4" width="1" height="1" fill="#C8C8D0"/><rect x="13" y="4" width="1" height="1" fill="#FFFF00"/><rect x="14" y="4" width="1" height="1" fill="#808080"/><rect x="15" y="4" width="1" height="1" fill="#000000"/><rect x="0" y="5" width="13" height="1" fill="#808080"/><rect x="13" y="5" width="1" height="1" fill="#000000"/><rect x="14" y="5" width="1" height="1" fill="#FFFF00"/><rect x="15" y="5" width="1" height="1" fill="#000000"/><rect x="0" y="6" width="1" height="1" fill="#808080"/><rect x="1" y="6" width="12" height="1" fill="#FFFFFF"/><rect x="13" y="6" width="1" height="1" fill="#000000"/><rect x="14" y="6" width="1" height="1" fill="#C8C8D0"/><rect x="15" y="6" width="1" height="1" fill="#000000"/><rect x="1" y="7" width="1" height="1" fill="#808080"/><rect x="2" y="7" width="1" height="1" fill="#FFFF00"/><rect x="3" y="7" width="1" height="1" fill="#C8C8D0"/><rect x="4" y="7" width="1" height="1" fill="#FFFF00"/><rect x="5" y="7" width="1" height="1" fill="#C8C8D0"/><rect x="6" y="7" width="1" height="1" fill="#FFFF00"/><rect x="7" y="7" width="1" height="1" fill="#C8C8D0"/><rect x="8" y="7" width="1" height="1" fill="#FFFF00"/><rect x="9" y="7" width="1" height="1" fill="#C8C8D0"/><rect x="10" y="7" width="1" height="1" fill="#FFFF00"/><rect x="11" y="7" width="1" height="1" fill="#C8C8D0"/><rect x="12" y="7" width="1" height="1" fill="#FFFF00"/><rect x="13" y="7" width="1" height="1" fill="#C8C8D0"/><rect x="14" y="7" width="2" height="1" fill="#000000"/><rect x="1" y="8" width="1" height="1" fill="#808080"/><rect x="2" y="8" width="1" height="1" fill="#C8C8D0"/><rect x="3" y="8" width="1" height="1" fill="#FFFF00"/><rect x="4" y="8" width="1" height="1" fill="#C8C8D0"/><rect x="5" y="8" width="1" height="1" fill="#FFFF00"/><rect x="6" y="8" width="1" height="1" fill="#C8C8D0"/><rect x="7" y="8" width="1" height="1" fill="#FFFF00"/><rect x="8" y="8" width="1" height="1" fill="#C8C8D0"/><rect x="9" y="8" width="1" height="1" fill="#FFFF00"/><rect x="10" y="8" width="1" height="1" fill="#C8C8D0"/><rect x="11" y="8" width="1" height="1" fill="#FFFF00"/><rect x="12" y="8" width="1" height="1" fill="#C8C8D0"/><rect x="13" y="8" width="1" height="1" fill="#FFFF00"/><rect x="14" y="8" width="2" height="1" fill="#000000"/><rect x="2" y="9" width="1" height="1" fill="#808080"/><rect x="3" y="9" width="1" height="1" fill="#FFFF00"/><rect x="4" y="9" width="1" height="1" fill="#C8C8D0"/><rect x="5" y="9" width="1" height="1" fill="#FFFF00"/><rect x="6" y="9" width="1" height="1" fill="#C8C8D0"/><rect x="7" y="9" width="1" height="1" fill="#FFFF00"/><rect x="8" y="9" width="1" height="1" fill="#C8C8D0"/><rect x="9" y="9" width="1" height="1" fill="#FFFF00"/><rect x="10" y="9" width="1" height="1" fill="#C8C8D0"/><rect x="11" y="9" width="1" height="1" fill="#FFFF00"/><rect x="12" y="9" width="1" height="1" fill="#C8C8D0"/><rect x="13" y="9" width="1" height="1" fill="#FFFF00"/><rect x="14" y="9" width="1" height="1" fill="#C8C8D0"/><rect x="15" y="9" width="1" height="1" fill="#000000"/><rect x="2" y="10" width="1" height="1" fill="#808080"/><rect x="3" y="10" width="1" height="1" fill="#C8C8D0"/><rect x="4" y="10" width="1" height="1" fill="#FFFF00"/><rect x="5" y="10" width="1" height="1" fill="#C8C8D0"/><rect x="6" y="10" width="1" height="1" fill="#FFFF00"/><rect x="7" y="10" width="1" height="1" fill="#C8C8D0"/><rect x="8" y="10" width="1" height="1" fill="#FFFF00"/><rect x="9" y="10" width="1" height="1" fill="#C8C8D0"/><rect x="10" y="10" width="1" height="1" fill="#FFFF00"/><rect x="11" y="10" width="1" height="1" fill="#C8C8D0"/><rect x="12" y="10" width="1" height="1" fill="#FFFF00"/><rect x="13" y="10" width="1" height="1" fill="#C8C8D0"/><rect x="14" y="10" width="2" height="1" fill="#000000"/><rect x="3" y="11" width="12" height="1" fill="#808080"/><rect x="15" y="11" width="1" height="1" fill="#000000"/><rect x="3" y="12" width="13" height="1" fill="#000000"/></svg>
<div class="a t" style="left:82px;top:145px;color:#000;transform:scaleY(1.125);transform-origin:0 10px;letter-spacing:-0.429px;">305K_sqw</div>
<div class="a" style="left:71px;top:167px;width:9px;height:1px;background:repeating-linear-gradient(to right,#A0A0A0 0 1px,transparent 1px 2px)"></div>
<svg class="a" style="left:82px;top:160px" width="12" height="14" shape-rendering="crispEdges"><rect x="0" y="0" width="9" height="1" fill="#808080"/><rect x="0" y="1" width="1" height="1" fill="#808080"/><rect x="1" y="1" width="7" height="1" fill="#FFFFFF"/><rect x="8" y="1" width="2" height="1" fill="#808080"/><rect x="0" y="2" width="1" height="1" fill="#808080"/><rect x="1" y="2" width="7" height="1" fill="#FFFFFF"/><rect x="8" y="2" width="1" height="1" fill="#808080"/><rect x="9" y="2" width="1" height="1" fill="#FFFFFF"/><rect x="10" y="2" width="1" height="1" fill="#808080"/><rect x="0" y="3" width="1" height="1" fill="#808080"/><rect x="1" y="3" width="7" height="1" fill="#FFFFFF"/><rect x="8" y="3" width="4" height="1" fill="#000000"/><rect x="0" y="4" width="1" height="1" fill="#808080"/><rect x="1" y="4" width="1" height="1" fill="#FFFFFF"/><rect x="2" y="4" width="5" height="1" fill="#000000"/><rect x="7" y="4" width="4" height="1" fill="#FFFFFF"/><rect x="11" y="4" width="1" height="1" fill="#000000"/><rect x="0" y="5" width="1" height="1" fill="#808080"/><rect x="1" y="5" width="10" height="1" fill="#FFFFFF"/><rect x="11" y="5" width="1" height="1" fill="#000000"/><rect x="0" y="6" width="1" height="1" fill="#808080"/><rect x="1" y="6" width="1" height="1" fill="#FFFFFF"/><rect x="2" y="6" width="8" height="1" fill="#000000"/><rect x="10" y="6" width="1" height="1" fill="#FFFFFF"/><rect x="11" y="6" width="1" height="1" fill="#000000"/><rect x="0" y="7" width="1" height="1" fill="#808080"/><rect x="1" y="7" width="10" height="1" fill="#FFFFFF"/><rect x="11" y="7" width="1" height="1" fill="#000000"/><rect x="0" y="8" width="1" height="1" fill="#808080"/><rect x="1" y="8" width="1" height="1" fill="#FFFFFF"/><rect x="2" y="8" width="8" height="1" fill="#000000"/><rect x="10" y="8" width="1" height="1" fill="#FFFFFF"/><rect x="11" y="8" width="1" height="1" fill="#000000"/><rect x="0" y="9" width="1" height="1" fill="#808080"/><rect x="1" y="9" width="10" height="1" fill="#FFFFFF"/><rect x="11" y="9" width="1" height="1" fill="#000000"/><rect x="0" y="10" width="1" height="1" fill="#808080"/><rect x="1" y="10" width="1" height="1" fill="#FFFFFF"/><rect x="2" y="10" width="8" height="1" fill="#000000"/><rect x="10" y="10" width="1" height="1" fill="#FFFFFF"/><rect x="11" y="10" width="1" height="1" fill="#000000"/><rect x="0" y="11" width="1" height="1" fill="#808080"/><rect x="1" y="11" width="10" height="1" fill="#FFFFFF"/><rect x="11" y="11" width="1" height="1" fill="#000000"/><rect x="0" y="12" width="1" height="1" fill="#808080"/><rect x="1" y="12" width="10" height="1" fill="#FFFFFF"/><rect x="11" y="12" width="1" height="1" fill="#000000"/><rect x="1" y="13" width="11" height="1" fill="#000000"/></svg>
<div class="a t" style="left:101px;top:161px;color:#000;transform:scaleY(1.125);transform-origin:0 10px;letter-spacing:-0.444px;">Instrument</div>
<div class="a" style="left:71px;top:183px;width:9px;height:1px;background:repeating-linear-gradient(to right,#A0A0A0 0 1px,transparent 1px 2px)"></div>
<svg class="a" style="left:82px;top:176px" width="12" height="14" shape-rendering="crispEdges"><rect x="0" y="0" width="9" height="1" fill="#808080"/><rect x="0" y="1" width="1" height="1" fill="#808080"/><rect x="1" y="1" width="7" height="1" fill="#FFFFFF"/><rect x="8" y="1" width="2" height="1" fill="#808080"/><rect x="0" y="2" width="1" height="1" fill="#808080"/><rect x="1" y="2" width="7" height="1" fill="#FFFFFF"/><rect x="8" y="2" width="1" height="1" fill="#808080"/><rect x="9" y="2" width="1" height="1" fill="#FFFFFF"/><rect x="10" y="2" width="1" height="1" fill="#808080"/><rect x="0" y="3" width="1" height="1" fill="#808080"/><rect x="1" y="3" width="7" height="1" fill="#FFFFFF"/><rect x="8" y="3" width="4" height="1" fill="#000000"/><rect x="0" y="4" width="1" height="1" fill="#808080"/><rect x="1" y="4" width="1" height="1" fill="#FFFFFF"/><rect x="2" y="4" width="5" height="1" fill="#000000"/><rect x="7" y="4" width="4" height="1" fill="#FFFFFF"/><rect x="11" y="4" width="1" height="1" fill="#000000"/><rect x="0" y="5" width="1" height="1" fill="#808080"/><rect x="1" y="5" width="10" height="1" fill="#FFFFFF"/><rect x="11" y="5" width="1" height="1" fill="#000000"/><rect x="0" y="6" width="1" height="1" fill="#808080"/><rect x="1" y="6" width="1" height="1" fill="#FFFFFF"/><rect x="2" y="6" width="8" height="1" fill="#000000"/><rect x="10" y="6" width="1" height="1" fill="#FFFFFF"/><rect x="11" y="6" width="1" height="1" fill="#000000"/><rect x="0" y="7" width="1" height="1" fill="#808080"/><rect x="1" y="7" width="10" height="1" fill="#FFFFFF"/><rect x="11" y="7" width="1" height="1" fill="#000000"/><rect x="0" y="8" width="1" height="1" fill="#808080"/><rect x="1" y="8" width="1" height="1" fill="#FFFFFF"/><rect x="2" y="8" width="8" height="1" fill="#000000"/><rect x="10" y="8" width="1" height="1" fill="#FFFFFF"/><rect x="11" y="8" width="1" height="1" fill="#000000"/><rect x="0" y="9" width="1" height="1" fill="#808080"/><rect x="1" y="9" width="10" height="1" fill="#FFFFFF"/><rect x="11" y="9" width="1" height="1" fill="#000000"/><rect x="0" y="10" width="1" height="1" fill="#808080"/><rect x="1" y="10" width="1" height="1" fill="#FFFFFF"/><rect x="2" y="10" width="8" height="1" fill="#000000"/><rect x="10" y="10" width="1" height="1" fill="#FFFFFF"/><rect x="11" y="10" width="1" height="1" fill="#000000"/><rect x="0" y="11" width="1" height="1" fill="#808080"/><rect x="1" y="11" width="10" height="1" fill="#FFFFFF"/><rect x="11" y="11" width="1" height="1" fill="#000000"/><rect x="0" y="12" width="1" height="1" fill="#808080"/><rect x="1" y="12" width="10" height="1" fill="#FFFFFF"/><rect x="11" y="12" width="1" height="1" fill="#000000"/><rect x="1" y="13" width="11" height="1" fill="#000000"/></svg>
<div class="a t" style="left:101px;top:177px;color:#000;transform:scaleY(1.125);transform-origin:0 10px;letter-spacing:-0.312px;">Treatment History</div>
<div class="a" style="left:75px;top:199px;width:5px;height:1px;background:repeating-linear-gradient(to right,#A0A0A0 0 1px,transparent 1px 2px)"></div>
<div class="a" style="left:65px;top:195px;width:9px;height:9px;border:1px solid #A8A593;box-sizing:border-box;background:#fff"></div>
<div class="a" style="left:67px;top:199px;width:5px;height:1px;background:#000"></div>
<div class="a" style="left:69px;top:197px;width:1px;height:5px;background:#000"></div>
<svg class="a" style="left:80px;top:193px" width="15" height="13" shape-rendering="crispEdges"><rect x="2" y="0" width="6" height="1" fill="#808080"/><rect x="1" y="1" width="1" height="1" fill="#808080"/><rect x="2" y="1" width="1" height="1" fill="#FFFF00"/><rect x="3" y="1" width="1" height="1" fill="#C8C8D0"/><rect x="4" y="1" width="1" height="1" fill="#FFFF00"/><rect x="5" y="1" width="1" height="1" fill="#C8C8D0"/><rect x="6" y="1" width="1" height="1" fill="#FFFF00"/><rect x="7" y="1" width="1" height="1" fill="#C8C8D0"/><rect x="8" y="1" width="1" height="1" fill="#808080"/><rect x="0" y="2" width="1" height="1" fill="#808080"/><rect x="1" y="2" width="1" height="1" fill="#C8C8D0"/><rect x="2" y="2" width="1" height="1" fill="#FFFF00"/><rect x="3" y="2" width="1" height="1" fill="#C8C8D0"/><rect x="4" y="2" width="1" height="1" fill="#FFFF00"/><rect x="5" y="2" width="1" height="1" fill="#C8C8D0"/><rect x="6" y="2" width="1" height="1" fill="#FFFF00"/><rect x="7" y="2" width="1" height="1" fill="#C8C8D0"/><rect x="8" y="2" width="1" height="1" fill="#FFFF00"/><rect x="9" y="2" width="5" height="1" fill="#808080"/><rect x="0" y="3" width="1" height="1" fill="#808080"/><rect x="1" y="3" width="13" height="1" fill="#FFFFFF"/><rect x="14" y="3" width="1" height="1" fill="#000000"/><rect x="0" y="4" width="1" height="1" fill="#808080"/><rect x="1" y="4" width="1" height="1" fill="#FFFFFF"/><rect x="2" y="4" width="1" height="1" fill="#FFFF00"/><rect x="3" y="4" width="1" height="1" fill="#C8C8D0"/><rect x="4" y="4" width="1" height="1" fill="#FFFF00"/><rect x="5" y="4" width="1" height="1" fill="#C8C8D0"/><rect x="6" y="4" width="1" height="1" fill="#FFFF00"/><rect x="7" y="4" width="1" height="1" fill="#C8C8D0"/><rect x="8" y="4" width="1" height="1" fill="#FFFF00"/><rect x="9" y="4" width="1" height="1" fill="#C8C8D0"/><rect x="10" y="4" width="1" height="1" fill="#FFFF00"/><rect x="11" y="4" width="1" height="1" fill="#C8C8D0"/><rect x="12" y="4" width="1" height="1" fill="#FFFF00"/><rect x="13" y="4" width="1" height="1" fill="#808080"/><rect x="14" y="4" width="1" height="1" fill="#000000"/><rect x="0" y="5" width="1" height="1" fill="#808080"/><rect x="1" y="5" width="1" height="1" fill="#FFFFFF"/><rect x="2" y="5" width="1" height="1" fill="#C8C8D0"/><rect x="3" y="5" width="1" height="1" fill="#FFFF00"/><rect x="4" y="5" width="1" height="1" fill="#C8C8D0"/><rect x="5" y="5" width="1" height="1" fill="#FFFF00"/><rect x="6" y="5" width="1" height="1" fill="#C8C8D0"/><rect x="7" y="5" width="1" height="1" fill="#FFFF00"/><rect x="8" y="5" width="1" height="1" fill="#C8C8D0"/><rect x="9" y="5" width="1" height="1" fill="#FFFF00"/><rect x="10" y="5" width="1" height="1" fill="#C8C8D0"/><rect x="11" y="5" width="1" height="1" fill="#FFFF00"/><rect x="12" y="5" width="1" height="1" fill="#C8C8D0"/><rect x="13" y="5" width="1" height="1" fill="#808080"/><rect x="14" y="5" width="1" height="1" fill="#000000"/><rect x="0" y="6" width="1" height="1" fill="#808080"/><rect x="1" y="6" width="1" height="1" fill="#FFFFFF"/><rect x="2" y="6" width="1" height="1" fill="#FFFF00"/><rect x="3" y="6" width="1" height="1" fill="#C8C8D0"/><rect x="4" y="6" width="1" height="1" fill="#FFFF00"/><rect x="5" y="6" width="1" height="1" fill="#C8C8D0"/><rect x="6" y="6" width="1" height="1" fill="#FFFF00"/><rect x="7" y="6" width="1" height="1" fill="#C8C8D0"/><rect x="8" y="6" width="1" height="1" fill="#FFFF00"/><rect x="9" y="6" width="1" height="1" fill="#C8C8D0"/><rect x="10" y="6" width="1" height="1" fill="#FFFF00"/><rect x="11" y="6" width="1" height="1" fill="#C8C8D0"/><rect x="12" y="6" width="1" height="1" fill="#FFFF00"/><rect x="13" y="6" width="1" height="1" fill="#808080"/><rect x="14" y="6" width="1" height="1" fill="#000000"/><rect x="0" y="7" width="1" height="1" fill="#808080"/><rect x="1" y="7" width="1" height="1" fill="#FFFFFF"/><rect x="2" y="7" width="1" height="1" fill="#C8C8D0"/><rect x="3" y="7" width="1" height="1" fill="#FFFF00"/><rect x="4" y="7" width="1" height="1" fill="#C8C8D0"/><rect x="5" y="7" width="1" height="1" fill="#FFFF00"/><rect x="6" y="7" width="1" height="1" fill="#C8C8D0"/><rect x="7" y="7" width="1" height="1" fill="#FFFF00"/><rect x="8" y="7" width="1" height="1" fill="#C8C8D0"/><rect x="9" y="7" width="1" height="1" fill="#FFFF00"/><rect x="10" y="7" width="1" height="1" fill="#C8C8D0"/><rect x="11" y="7" width="1" height="1" fill="#FFFF00"/><rect x="12" y="7" width="1" height="1" fill="#C8C8D0"/><rect x="13" y="7" width="1" height="1" fill="#808080"/><rect x="14" y="7" width="1" height="1" fill="#000000"/><rect x="0" y="8" width="1" height="1" fill="#808080"/><rect x="1" y="8" width="1" height="1" fill="#FFFFFF"/><rect x="2" y="8" width="1" height="1" fill="#FFFF00"/><rect x="3" y="8" width="1" height="1" fill="#C8C8D0"/><rect x="4" y="8" width="1" height="1" fill="#FFFF00"/><rect x="5" y="8" width="1" height="1" fill="#C8C8D0"/><rect x="6" y="8" width="1" height="1" fill="#FFFF00"/><rect x="7" y="8" width="1" height="1" fill="#C8C8D0"/><rect x="8" y="8" width="1" height="1" fill="#FFFF00"/><rect x="9" y="8" width="1" height="1" fill="#C8C8D0"/><rect x="10" y="8" width="1" height="1" fill="#FFFF00"/><rect x="11" y="8" width="1" height="1" fill="#C8C8D0"/><rect x="12" y="8" width="1" height="1" fill="#FFFF00"/><rect x="13" y="8" width="1" height="1" fill="#808080"/><rect x="14" y="8" width="1" height="1" fill="#000000"/><rect x="0" y="9" width="1" height="1" fill="#808080"/><rect x="1" y="9" width="1" height="1" fill="#FFFFFF"/><rect x="2" y="9" width="1" height="1" fill="#C8C8D0"/><rect x="3" y="9" width="1" height="1" fill="#FFFF00"/><rect x="4" y="9" width="1" height="1" fill="#C8C8D0"/><rect x="5" y="9" width="1" height="1" fill="#FFFF00"/><rect x="6" y="9" width="1" height="1" fill="#C8C8D0"/><rect x="7" y="9" width="1" height="1" fill="#FFFF00"/><rect x="8" y="9" width="1" height="1" fill="#C8C8D0"/><rect x="9" y="9" width="1" height="1" fill="#FFFF00"/><rect x="10" y="9" width="1" height="1" fill="#C8C8D0"/><rect x="11" y="9" width="1" height="1" fill="#FFFF00"/><rect x="12" y="9" width="1" height="1" fill="#C8C8D0"/><rect x="13" y="9" width="1" height="1" fill="#808080"/><rect x="14" y="9" width="1" height="1" fill="#000000"/><rect x="0" y="10" width="1" height="1" fill="#808080"/><rect x="1" y="10" width="1" height="1" fill="#FFFFFF"/><rect x="2" y="10" width="1" height="1" fill="#FFFF00"/><rect x="3" y="10" width="1" height="1" fill="#C8C8D0"/><rect x="4" y="10" width="1" height="1" fill="#FFFF00"/><rect x="5" y="10" width="1" height="1" fill="#C8C8D0"/><rect x="6" y="10" width="1" height="1" fill="#FFFF00"/><rect x="7" y="10" width="1" height="1" fill="#C8C8D0"/><rect x="8" y="10" width="1" height="1" fill="#FFFF00"/><rect x="9" y="10" width="1" height="1" fill="#C8C8D0"/><rect x="10" y="10" width="1" height="1" fill="#FFFF00"/><rect x="11" y="10" width="1" height="1" fill="#C8C8D0"/><rect x="12" y="10" width="1" height="1" fill="#FFFF00"/><rect x="13" y="10" width="1" height="1" fill="#808080"/><rect x="14" y="10" width="1" height="1" fill="#000000"/><rect x="0" y="11" width="14" height="1" fill="#808080"/><rect x="14" y="11" width="1" height="1" fill="#000000"/><rect x="1" y="12" width="14" height="1" fill="#000000"/></svg>
<div class="a t" style="left:101px;top:193px;color:#000;transform:scaleY(1.125);transform-origin:0 10px;letter-spacing:-0.050px;">Sample Infomation Tag</div>
<div class="a" style="left:75px;top:215px;width:5px;height:1px;background:repeating-linear-gradient(to right,#A0A0A0 0 1px,transparent 1px 2px)"></div>
<div class="a" style="left:65px;top:211px;width:9px;height:9px;border:1px solid #A8A593;box-sizing:border-box;background:#fff"></div>
<div class="a" style="left:67px;top:215px;width:5px;height:1px;background:#000"></div>
<svg class="a" style="left:80px;top:208px" width="14" height="15" shape-rendering="crispEdges"><rect x="0" y="0" width="1" height="1" fill="#000000"/><rect x="6" y="0" width="3" height="1" fill="#0000FF"/><rect x="0" y="1" width="1" height="1" fill="#000000"/><rect x="4" y="1" width="2" height="1" fill="#0000FF"/><rect x="9" y="1" width="2" height="1" fill="#0000FF"/><rect x="0" y="2" width="1" height="1" fill="#000000"/><rect x="3" y="2" width="1" height="1" fill="#0000FF"/><rect x="5" y="2" width="2" height="1" fill="#0000FF"/><rect x="8" y="2" width="1" height="1" fill="#0000FF"/><rect x="11" y="2" width="1" height="1" fill="#0000FF"/><rect x="0" y="3" width="1" height="1" fill="#000000"/><rect x="2" y="3" width="1" height="1" fill="#0000FF"/><rect x="6" y="3" width="2" height="1" fill="#0000FF"/><rect x="11" y="3" width="1" height="1" fill="#0000FF"/><rect x="0" y="4" width="1" height="1" fill="#000000"/><rect x="2" y="4" width="1" height="1" fill="#0000FF"/><rect x="5" y="4" width="1" height="1" fill="#0000FF"/><rect x="7" y="4" width="2" height="1" fill="#0000FF"/><rect x="12" y="4" width="1" height="1" fill="#0000FF"/><rect x="0" y="5" width="1" height="1" fill="#000000"/><rect x="2" y="5" width="1" height="1" fill="#0000FF"/><rect x="5" y="5" width="1" height="1" fill="#0000FF"/><rect x="8" y="5" width="1" height="1" fill="#0000FF"/><rect x="11" y="5" width="2" height="1" fill="#0000FF"/><rect x="0" y="6" width="1" height="1" fill="#000000"/><rect x="2" y="6" width="3" height="1" fill="#0000FF"/><rect x="9" y="6" width="3" height="1" fill="#0000FF"/><rect x="0" y="7" width="1" height="1" fill="#000000"/><rect x="3" y="7" width="2" height="1" fill="#0000FF"/><rect x="8" y="7" width="1" height="1" fill="#0000FF"/><rect x="13" y="7" width="1" height="1" fill="#000000"/><rect x="0" y="8" width="1" height="1" fill="#000000"/><rect x="4" y="8" width="1" height="1" fill="#0000FF"/><rect x="8" y="8" width="1" height="1" fill="#0000FF"/><rect x="12" y="8" width="1" height="1" fill="#000000"/><rect x="1" y="9" width="1" height="1" fill="#000000"/><rect x="5" y="9" width="1" height="1" fill="#0000FF"/><rect x="7" y="9" width="1" height="1" fill="#0000FF"/><rect x="11" y="9" width="1" height="1" fill="#000000"/><rect x="2" y="10" width="1" height="1" fill="#000000"/><rect x="6" y="10" width="1" height="1" fill="#0000FF"/><rect x="10" y="10" width="1" height="1" fill="#000000"/><rect x="3" y="11" width="1" height="1" fill="#000000"/><rect x="6" y="11" width="1" height="1" fill="#0000FF"/><rect x="9" y="11" width="1" height="1" fill="#000000"/><rect x="4" y="12" width="1" height="1" fill="#000000"/><rect x="8" y="12" width="1" height="1" fill="#000000"/><rect x="5" y="13" width="1" height="1" fill="#000000"/><rect x="7" y="13" width="1" height="1" fill="#000000"/><rect x="6" y="14" width="1" height="1" fill="#000000"/></svg>
<div class="a t" style="left:101px;top:209px;color:#000;transform:scaleY(1.125);transform-origin:0 10px;letter-spacing:-0.344px;">Experimental Data</div>
<div class="a" style="left:90px;top:231px;width:9px;height:1px;background:repeating-linear-gradient(to right,#A0A0A0 0 1px,transparent 1px 2px)"></div>
<svg class="a" style="left:101px;top:224px" width="12" height="14" shape-rendering="crispEdges"><rect x="0" y="0" width="9" height="1" fill="#808080"/><rect x="0" y="1" width="1" height="1" fill="#808080"/><rect x="1" y="1" width="7" height="1" fill="#FFFFFF"/><rect x="8" y="1" width="2" height="1" fill="#808080"/><rect x="0" y="2" width="1" height="1" fill="#808080"/><rect x="1" y="2" width="7" height="1" fill="#FFFFFF"/><rect x="8" y="2" width="1" height="1" fill="#808080"/><rect x="9" y="2" width="1" height="1" fill="#FFFFFF"/><rect x="10" y="2" width="1" height="1" fill="#808080"/><rect x="0" y="3" width="1" height="1" fill="#808080"/><rect x="1" y="3" width="7" height="1" fill="#FFFFFF"/><rect x="8" y="3" width="4" height="1" fill="#000000"/><rect x="0" y="4" width="1" height="1" fill="#808080"/><rect x="1" y="4" width="1" height="1" fill="#FFFFFF"/><rect x="2" y="4" width="5" height="1" fill="#000000"/><rect x="7" y="4" width="4" height="1" fill="#FFFFFF"/><rect x="11" y="4" width="1" height="1" fill="#000000"/><rect x="0" y="5" width="1" height="1" fill="#808080"/><rect x="1" y="5" width="10" height="1" fill="#FFFFFF"/><rect x="11" y="5" width="1" height="1" fill="#000000"/><rect x="0" y="6" width="1" height="1" fill="#808080"/><rect x="1" y="6" width="1" height="1" fill="#FFFFFF"/><rect x="2" y="6" width="8" height="1" fill="#000000"/><rect x="10" y="6" width="1" height="1" fill="#FFFFFF"/><rect x="11" y="6" width="1" height="1" fill="#000000"/><rect x="0" y="7" width="1" height="1" fill="#808080"/><rect x="1" y="7" width="10" height="1" fill="#FFFFFF"/><rect x="11" y="7" width="1" height="1" fill="#000000"/><rect x="0" y="8" width="1" height="1" fill="#808080"/><rect x="1" y="8" width="1" height="1" fill="#FFFFFF"/><rect x="2" y="8" width="8" height="1" fill="#000000"/><rect x="10" y="8" width="1" height="1" fill="#FFFFFF"/><rect x="11" y="8" width="1" height="1" fill="#000000"/><rect x="0" y="9" width="1" height="1" fill="#808080"/><rect x="1" y="9" width="10" height="1" fill="#FFFFFF"/><rect x="11" y="9" width="1" height="1" fill="#000000"/><rect x="0" y="10" width="1" height="1" fill="#808080"/><rect x="1" y="10" width="1" height="1" fill="#FFFFFF"/><rect x="2" y="10" width="8" height="1" fill="#000000"/><rect x="10" y="10" width="1" height="1" fill="#FFFFFF"/><rect x="11" y="10" width="1" height="1" fill="#000000"/><rect x="0" y="11" width="1" height="1" fill="#808080"/><rect x="1" y="11" width="10" height="1" fill="#FFFFFF"/><rect x="11" y="11" width="1" height="1" fill="#000000"/><rect x="0" y="12" width="1" height="1" fill="#808080"/><rect x="1" y="12" width="10" height="1" fill="#FFFFFF"/><rect x="11" y="12" width="1" height="1" fill="#000000"/><rect x="1" y="13" width="11" height="1" fill="#000000"/></svg>
<div class="a t" style="left:120px;top:225px;color:#000;transform:scaleY(1.125);transform-origin:0 10px;letter-spacing:-0.143px;">Energy Transfer</div>
<div class="a" style="left:90px;top:247px;width:9px;height:1px;background:repeating-linear-gradient(to right,#A0A0A0 0 1px,transparent 1px 2px)"></div>
<svg class="a" style="left:101px;top:240px" width="12" height="14" shape-rendering="crispEdges"><rect x="0" y="0" width="9" height="1" fill="#808080"/><rect x="0" y="1" width="1" height="1" fill="#808080"/><rect x="1" y="1" width="7" height="1" fill="#FFFFFF"/><rect x="8" y="1" width="2" height="1" fill="#808080"/><rect x="0" y="2" width="1" height="1" fill="#808080"/><rect x="1" y="2" width="7" height="1" fill="#FFFFFF"/><rect x="8" y="2" width="1" height="1" fill="#808080"/><rect x="9" y="2" width="1" height="1" fill="#FFFFFF"/><rect x="10" y="2" width="1" height="1" fill="#808080"/><rect x="0" y="3" width="1" height="1" fill="#808080"/><rect x="1" y="3" width="7" height="1" fill="#FFFFFF"/><rect x="8" y="3" width="4" height="1" fill="#000000"/><rect x="0" y="4" width="1" height="1" fill="#808080"/><rect x="1" y="4" width="1" height="1" fill="#FFFFFF"/><rect x="2" y="4" width="5" height="1" fill="#000000"/><rect x="7" y="4" width="4" height="1" fill="#FFFFFF"/><rect x="11" y="4" width="1" height="1" fill="#000000"/><rect x="0" y="5" width="1" height="1" fill="#808080"/><rect x="1" y="5" width="10" height="1" fill="#FFFFFF"/><rect x="11" y="5" width="1" height="1" fill="#000000"/><rect x="0" y="6" width="1" height="1" fill="#808080"/><rect x="1" y="6" width="1" height="1" fill="#FFFFFF"/><rect x="2" y="6" width="8" height="1" fill="#000000"/><rect x="10" y="6" width="1" height="1" fill="#FFFFFF"/><rect x="11" y="6" width="1" height="1" fill="#000000"/><rect x="0" y="7" width="1" height="1" fill="#808080"/><rect x="1" y="7" width="10" height="1" fill="#FFFFFF"/><rect x="11" y="7" width="1" height="1" fill="#000000"/><rect x="0" y="8" width="1" height="1" fill="#808080"/><rect x="1" y="8" width="1" height="1" fill="#FFFFFF"/><rect x="2" y="8" width="8" height="1" fill="#000000"/><rect x="10" y="8" width="1" height="1" fill="#FFFFFF"/><rect x="11" y="8" width="1" height="1" fill="#000000"/><rect x="0" y="9" width="1" height="1" fill="#808080"/><rect x="1" y="9" width="10" height="1" fill="#FFFFFF"/><rect x="11" y="9" width="1" height="1" fill="#000000"/><rect x="0" y="10" width="1" height="1" fill="#808080"/><rect x="1" y="10" width="1" height="1" fill="#FFFFFF"/><rect x="2" y="10" width="8" height="1" fill="#000000"/><rect x="10" y="10" width="1" height="1" fill="#FFFFFF"/><rect x="11" y="10" width="1" height="1" fill="#000000"/><rect x="0" y="11" width="1" height="1" fill="#808080"/><rect x="1" y="11" width="10" height="1" fill="#FFFFFF"/><rect x="11" y="11" width="1" height="1" fill="#000000"/><rect x="0" y="12" width="1" height="1" fill="#808080"/><rect x="1" y="12" width="10" height="1" fill="#FFFFFF"/><rect x="11" y="12" width="1" height="1" fill="#000000"/><rect x="1" y="13" width="11" height="1" fill="#000000"/></svg>
<div class="a t" style="left:120px;top:241px;color:#000;transform:scaleY(1.125);transform-origin:0 10px;letter-spacing:-0.200px;">Mean Q</div>
<div class="a" style="left:90px;top:263px;width:9px;height:1px;background:repeating-linear-gradient(to right,#A0A0A0 0 1px,transparent 1px 2px)"></div>
<svg class="a" style="left:101px;top:256px" width="12" height="14" shape-rendering="crispEdges"><rect x="0" y="0" width="9" height="1" fill="#808080"/><rect x="0" y="1" width="1" height="1" fill="#808080"/><rect x="1" y="1" width="7" height="1" fill="#FFFFFF"/><rect x="8" y="1" width="2" height="1" fill="#808080"/><rect x="0" y="2" width="1" height="1" fill="#808080"/><rect x="1" y="2" width="7" height="1" fill="#FFFFFF"/><rect x="8" y="2" width="1" height="1" fill="#808080"/><rect x="9" y="2" width="1" height="1" fill="#FFFFFF"/><rect x="10" y="2" width="1" height="1" fill="#808080"/><rect x="0" y="3" width="1" height="1" fill="#808080"/><rect x="1" y="3" width="7" height="1" fill="#FFFFFF"/><rect x="8" y="3" width="4" height="1" fill="#000000"/><rect x="0" y="4" width="1" height="1" fill="#808080"/><rect x="1" y="4" width="1" height="1" fill="#FFFFFF"/><rect x="2" y="4" width="5" height="1" fill="#000000"/><rect x="7" y="4" width="4" height="1" fill="#FFFFFF"/><rect x="11" y="4" width="1" height="1" fill="#000000"/><rect x="0" y="5" width="1" height="1" fill="#808080"/><rect x="1" y="5" width="10" height="1" fill="#FFFFFF"/><rect x="11" y="5" width="1" height="1" fill="#000000"/><rect x="0" y="6" width="1" height="1" fill="#808080"/><rect x="1" y="6" width="1" height="1" fill="#FFFFFF"/><rect x="2" y="6" width="8" height="1" fill="#000000"/><rect x="10" y="6" width="1" height="1" fill="#FFFFFF"/><rect x="11" y="6" width="1" height="1" fill="#000000"/><rect x="0" y="7" width="1" height="1" fill="#808080"/><rect x="1" y="7" width="10" height="1" fill="#FFFFFF"/><rect x="11" y="7" width="1" height="1" fill="#000000"/><rect x="0" y="8" width="1" height="1" fill="#808080"/><rect x="1" y="8" width="1" height="1" fill="#FFFFFF"/><rect x="2" y="8" width="8" height="1" fill="#000000"/><rect x="10" y="8" width="1" height="1" fill="#FFFFFF"/><rect x="11" y="8" width="1" height="1" fill="#000000"/><rect x="0" y="9" width="1" height="1" fill="#808080"/><rect x="1" y="9" width="10" height="1" fill="#FFFFFF"/><rect x="11" y="9" width="1" height="1" fill="#000000"/><rect x="0" y="10" width="1" height="1" fill="#808080"/><rect x="1" y="10" width="1" height="1" fill="#FFFFFF"/><rect x="2" y="10" width="8" height="1" fill="#000000"/><rect x="10" y="10" width="1" height="1" fill="#FFFFFF"/><rect x="11" y="10" width="1" height="1" fill="#000000"/><rect x="0" y="11" width="1" height="1" fill="#808080"/><rect x="1" y="11" width="10" height="1" fill="#FFFFFF"/><rect x="11" y="11" width="1" height="1" fill="#000000"/><rect x="0" y="12" width="1" height="1" fill="#808080"/><rect x="1" y="12" width="10" height="1" fill="#FFFFFF"/><rect x="11" y="12" width="1" height="1" fill="#000000"/><rect x="1" y="13" width="11" height="1" fill="#000000"/></svg>
<div class="a" style="left:118px;top:255px;width:37px;height:16px;background:#ECE9D8"></div>
<div class="a t" style="left:120px;top:257px;color:#000;transform:scaleY(1.125);transform-origin:0 10px;letter-spacing:-0.400px;">S(Q,w)</div>
<div class="a" style="left:90px;top:279px;width:9px;height:1px;background:repeating-linear-gradient(to right,#A0A0A0 0 1px,transparent 1px 2px)"></div>
<svg class="a" style="left:101px;top:272px" width="12" height="14" shape-rendering="crispEdges"><rect x="0" y="0" width="9" height="1" fill="#808080"/><rect x="0" y="1" width="1" height="1" fill="#808080"/><rect x="1" y="1" width="7" height="1" fill="#FFFFFF"/><rect x="8" y="1" width="2" height="1" fill="#808080"/><rect x="0" y="2" width="1" height="1" fill="#808080"/><rect x="1" y="2" width="7" height="1" fill="#FFFFFF"/><rect x="8" y="2" width="1" height="1" fill="#808080"/><rect x="9" y="2" width="1" height="1" fill="#FFFFFF"/><rect x="10" y="2" width="1" height="1" fill="#808080"/><rect x="0" y="3" width="1" height="1" fill="#808080"/><rect x="1" y="3" width="7" height="1" fill="#FFFFFF"/><rect x="8" y="3" width="4" height="1" fill="#000000"/><rect x="0" y="4" width="1" height="1" fill="#808080"/><rect x="1" y="4" width="1" height="1" fill="#FFFFFF"/><rect x="2" y="4" width="5" height="1" fill="#000000"/><rect x="7" y="4" width="4" height="1" fill="#FFFFFF"/><rect x="11" y="4" width="1" height="1" fill="#000000"/><rect x="0" y="5" width="1" height="1" fill="#808080"/><rect x="1" y="5" width="10" height="1" fill="#FFFFFF"/><rect x="11" y="5" width="1" height="1" fill="#000000"/><rect x="0" y="6" width="1" height="1" fill="#808080"/><rect x="1" y="6" width="1" height="1" fill="#FFFFFF"/><rect x="2" y="6" width="8" height="1" fill="#000000"/><rect x="10" y="6" width="1" height="1" fill="#FFFFFF"/><rect x="11" y="6" width="1" height="1" fill="#000000"/><rect x="0" y="7" width="1" height="1" fill="#808080"/><rect x="1" y="7" width="10" height="1" fill="#FFFFFF"/><rect x="11" y="7" width="1" height="1" fill="#000000"/><rect x="0" y="8" width="1" height="1" fill="#808080"/><rect x="1" y="8" width="1" height="1" fill="#FFFFFF"/><rect x="2" y="8" width="8" height="1" fill="#000000"/><rect x="10" y="8" width="1" height="1" fill="#FFFFFF"/><rect x="11" y="8" width="1" height="1" fill="#000000"/><rect x="0" y="9" width="1" height="1" fill="#808080"/><rect x="1" y="9" width="10" height="1" fill="#FFFFFF"/><rect x="11" y="9" width="1" height="1" fill="#000000"/><rect x="0" y="10" width="1" height="1" fill="#808080"/><rect x="1" y="10" width="1" height="1" fill="#FFFFFF"/><rect x="2" y="10" width="8" height="1" fill="#000000"/><rect x="10" y="10" width="1" height="1" fill="#FFFFFF"/><rect x="11" y="10" width="1" height="1" fill="#000000"/><rect x="0" y="11" width="1" height="1" fill="#808080"/><rect x="1" y="11" width="10" height="1" fill="#FFFFFF"/><rect x="11" y="11" width="1" height="1" fill="#000000"/><rect x="0" y="12" width="1" height="1" fill="#808080"/><rect x="1" y="12" width="10" height="1" fill="#FFFFFF"/><rect x="11" y="12" width="1" height="1" fill="#000000"/><rect x="1" y="13" width="11" height="1" fill="#000000"/></svg>
<div class="a t" style="left:120px;top:273px;color:#000;transform:scaleY(1.125);transform-origin:0 10px;letter-spacing:-0.750px;">Error</div>
<div class="a" style="left:377px;top:81px;width:352px;height:252px;border:1px solid #000;box-sizing:border-box"></div>
<div class="a" style="left:378px;top:82px;width:350px;height:250px;border:1px solid #FAF8EC;box-sizing:border-box"></div>
<div class="a" style="left:379px;top:83px;width:348px;height:16px;background:#ECE9D8"></div>
<div class="a" style="left:379px;top:99px;width:348px;height:1px;background:#ACA899"></div>
<div class="a" style="left:495px;top:100px;width:232px;height:202px;background:#fff"></div>
<div class="a" style="left:378px;top:100px;width:116px;height:17px;background:#ECE9D8"></div>
<div class="a" style="left:378px;top:100px;width:116px;height:1px;background:#fff"></div>
<div class="a" style="left:378px;top:100px;width:1px;height:17px;background:#fff"></div>
<div class="a" style="left:378px;top:117px;width:117px;height:1px;background:#ACA899"></div>
<div class="a" style="left:494px;top:100px;width:1px;height:18px;background:#ACA899"></div>
<div class="a" style="left:495px;top:117px;width:233px;height:1px;background:#C8C8C8"></div>
<div class="a t" style="left:380px;top:103px;color:#ACA899;transform:scaleY(1.125);transform-origin:0 10px;">Name</div>
<div class="a" style="left:378px;top:118px;width:116px;height:17px;background:#ECE9D8"></div>
<div class="a" style="left:378px;top:118px;width:116px;height:1px;background:#fff"></div>
<div class="a" style="left:378px;top:118px;width:1px;height:17px;background:#fff"></div>
<div class="a" style="left:378px;top:135px;width:117px;height:1px;background:#ACA899"></div>
<div class="a" style="left:494px;top:118px;width:1px;height:18px;background:#ACA899"></div>
<div class="a" style="left:495px;top:135px;width:233px;height:1px;background:#C8C8C8"></div>
<div class="a t" style="left:380px;top:121px;color:#ACA899;transform:scaleY(1.125);transform-origin:0 10px;">Description</div>
<div class="a" style="left:378px;top:136px;width:116px;height:17px;background:#ECE9D8"></div>
<div class="a" style="left:378px;top:136px;width:116px;height:1px;background:#fff"></div>
<div class="a" style="left:378px;top:136px;width:1px;height:17px;background:#fff"></div>
<div class="a" style="left:378px;top:153px;width:117px;height:1px;background:#ACA899"></div>
<div class="a" style="left:494px;top:136px;width:1px;height:18px;background:#ACA899"></div>
<div class="a" style="left:495px;top:153px;width:233px;height:1px;background:#C8C8C8"></div>
<div class="a t" style="left:380px;top:139px;color:#ACA899;transform:scaleY(1.125);transform-origin:0 10px;">Hidden</div>
<div class="a" style="left:378px;top:154px;width:116px;height:17px;background:#ECE9D8"></div>
<div class="a" style="left:378px;top:154px;width:116px;height:1px;background:#fff"></div>
<div class="a" style="left:378px;top:154px;width:1px;height:17px;background:#fff"></div>
<div class="a" style="left:378px;top:171px;width:117px;height:1px;background:#ACA899"></div>
<div class="a" style="left:494px;top:154px;width:1px;height:18px;background:#ACA899"></div>
<div class="a" style="left:495px;top:171px;width:233px;height:1px;background:#C8C8C8"></div>
<div class="a t" style="left:380px;top:157px;color:#ACA899;transform:scaleY(1.125);transform-origin:0 10px;">Type</div>
<div class="a" style="left:378px;top:172px;width:116px;height:17px;background:#ECE9D8"></div>
<div class="a" style="left:378px;top:172px;width:116px;height:1px;background:#fff"></div>
<div class="a" style="left:378px;top:172px;width:1px;height:17px;background:#fff"></div>
<div class="a" style="left:378px;top:189px;width:117px;height:1px;background:#ACA899"></div>
<div class="a" style="left:494px;top:172px;width:1px;height:18px;background:#ACA899"></div>
<div class="a" style="left:495px;top:189px;width:233px;height:1px;background:#C8C8C8"></div>
<div class="a t" style="left:380px;top:175px;color:#ACA899;transform:scaleY(1.125);transform-origin:0 10px;letter-spacing:-0.250px;">Data type</div>
<div class="a t" style="left:496px;top:173px;color:#ACA899;transform:scaleY(1.125);transform-origin:0 10px;letter-spacing:-0.200px;">DOUBLE</div>
<div class="a" style="left:378px;top:190px;width:116px;height:17px;background:#ECE9D8"></div>
<div class="a" style="left:378px;top:190px;width:116px;height:1px;background:#fff"></div>
<div class="a" style="left:378px;top:190px;width:1px;height:17px;background:#fff"></div>
<div class="a" style="left:378px;top:207px;width:117px;height:1px;background:#ACA899"></div>
<div class="a" style="left:494px;top:190px;width:1px;height:18px;background:#ACA899"></div>
<div class="a" style="left:495px;top:207px;width:233px;height:1px;background:#C8C8C8"></div>
<div class="a t" style="left:380px;top:193px;color:#ACA899;transform:scaleY(1.125);transform-origin:0 10px;letter-spacing:-0.368px;">Number of dimensions</div>
<div class="a t" style="left:496px;top:191px;color:#ACA899;transform:scaleY(1.125);transform-origin:0 10px;">2</div>
<div class="a" style="left:378px;top:208px;width:116px;height:17px;background:#ECE9D8"></div>
<div class="a" style="left:378px;top:208px;width:116px;height:1px;background:#fff"></div>
<div class="a" style="left:378px;top:208px;width:1px;height:17px;background:#fff"></div>
<div class="a" style="left:378px;top:225px;width:117px;height:1px;background:#ACA899"></div>
<div class="a" style="left:494px;top:208px;width:1px;height:18px;background:#ACA899"></div>
<div class="a" style="left:495px;top:225px;width:233px;height:1px;background:#C8C8C8"></div>
<div class="a t" style="left:380px;top:211px;color:#ACA899;transform:scaleY(1.125);transform-origin:0 10px;letter-spacing:-0.444px;">Dimensions</div>
<div class="a t" style="left:496px;top:209px;color:#ACA899;transform:scaleY(1.125);transform-origin:0 10px;letter-spacing:0.000px;">1000, 17</div>
<div class="a" style="left:378px;top:226px;width:116px;height:17px;background:#ECE9D8"></div>
<div class="a" style="left:378px;top:226px;width:116px;height:1px;background:#fff"></div>
<div class="a" style="left:378px;top:226px;width:1px;height:17px;background:#fff"></div>
<div class="a" style="left:378px;top:243px;width:117px;height:1px;background:#ACA899"></div>
<div class="a" style="left:494px;top:226px;width:1px;height:18px;background:#ACA899"></div>
<div class="a" style="left:495px;top:243px;width:233px;height:1px;background:#C8C8C8"></div>
<div class="a t" style="left:380px;top:229px;color:#ACA899;transform:scaleY(1.125);transform-origin:0 10px;letter-spacing:-0.182px;">Data used by</div>
<div class="a" style="left:378px;top:244px;width:116px;height:17px;background:#ECE9D8"></div>
<div class="a" style="left:378px;top:244px;width:116px;height:1px;background:#fff"></div>
<div class="a" style="left:378px;top:244px;width:1px;height:17px;background:#fff"></div>
<div class="a" style="left:378px;top:261px;width:117px;height:1px;background:#ACA899"></div>
<div class="a" style="left:494px;top:244px;width:1px;height:18px;background:#ACA899"></div>
<div class="a" style="left:495px;top:261px;width:233px;height:1px;background:#C8C8C8"></div>
<div class="a t" style="left:380px;top:247px;color:#000;transform:scaleY(1.125);transform-origin:0 10px;letter-spacing:-0.250px;">Axis Type</div>
<div class="a t" style="left:496px;top:245px;color:#000;transform:scaleY(1.125);transform-origin:0 10px;letter-spacing:0.667px;">DATA</div>
<div class="a" style="left:378px;top:262px;width:116px;height:17px;background:#ECE9D8"></div>
<div class="a" style="left:378px;top:262px;width:116px;height:1px;background:#fff"></div>
<div class="a" style="left:378px;top:262px;width:1px;height:17px;background:#fff"></div>
<div class="a" style="left:378px;top:279px;width:117px;height:1px;background:#ACA899"></div>
<div class="a" style="left:494px;top:262px;width:1px;height:18px;background:#ACA899"></div>
<div class="a" style="left:495px;top:279px;width:233px;height:1px;background:#C8C8C8"></div>
<div class="a t" style="left:380px;top:265px;color:#ACA899;transform:scaleY(1.125);transform-origin:0 10px;letter-spacing:-0.500px;">Value</div>
<div class="a t" style="left:496px;top:263px;color:#ACA899;transform:scaleY(1.125);transform-origin:0 10px;letter-spacing:-0.308px;">Size = 136.0KB</div>
<div class="a" style="left:6px;top:338px;width:739px;height:257px;border:1px solid #FAF8EC;box-sizing:border-box"></div>
<div class="a" style="left:7px;top:339px;width:737px;height:255px;border:1px solid #000;box-sizing:border-box"></div>
<div class="a" style="left:8px;top:340px;width:735px;height:253px;border:1px solid #F8F6EA;box-sizing:border-box"></div>
<div class="a" style="left:159px;top:349px;width:22px;height:22px;background:#ECE9D8"></div>
<div class="a" style="left:159px;top:349px;width:22px;height:1px;background:#FFFFFF"></div>
<div class="a" style="left:159px;top:349px;width:1px;height:22px;background:#FFFFFF"></div>
<div class="a" style="left:160px;top:369px;width:20px;height:1px;background:#ACA899"></div>
<div class="a" style="left:179px;top:350px;width:1px;height:20px;background:#ACA899"></div>
<div class="a" style="left:159px;top:370px;width:22px;height:1px;background:#000"></div>
<div class="a" style="left:180px;top:349px;width:1px;height:22px;background:#000"></div>
<div class="a" style="left:193px;top:349px;width:22px;height:22px;background:#ECE9D8"></div>
<div class="a" style="left:193px;top:349px;width:22px;height:1px;background:#FFFFFF"></div>
<div class="a" style="left:193px;top:349px;width:1px;height:22px;background:#FFFFFF"></div>
<div class="a" style="left:194px;top:369px;width:20px;height:1px;background:#ACA899"></div>
<div class="a" style="left:213px;top:350px;width:1px;height:20px;background:#ACA899"></div>
<div class="a" style="left:193px;top:370px;width:22px;height:1px;background:#000"></div>
<div class="a" style="left:214px;top:349px;width:1px;height:22px;background:#000"></div>
<svg class="a" style="left:164px;top:352px" width="11" height="16" viewBox="0 0 11 16">
<rect x="4" y="0" width="3" height="10" fill="#000"/><path d="M0.5 9 L10.5 9 L5.5 15 Z" fill="#000"/></svg>
<svg class="a" style="left:197px;top:352px" width="15" height="15" viewBox="0 0 15 15">
<path d="M2.5 2.5 L13.5 13.5 M13.5 2.5 L2.5 13.5" stroke="#fff" stroke-width="2"/>
<path d="M1.5 1.5 L12.5 12.5 M12.5 1.5 L1.5 12.5" stroke="#ACA899" stroke-width="2"/></svg>
<div class="a" style="left:17px;top:385px;width:350px;height:183px;background:#fff"></div>
<div class="a" style="left:19px;top:387px;width:112px;height:179px;background:#ECE9D8"></div>
<div class="a" style="left:131px;top:387px;width:235px;height:17px;background:#ECE9D8"></div>
<div class="a" style="left:17px;top:385px;width:350px;height:1px;background:#ACA899"></div>
<div class="a" style="left:17px;top:385px;width:1px;height:183px;background:#ACA899"></div>
<div class="a" style="left:18px;top:386px;width:348px;height:1px;background:#716F64"></div>
<div class="a" style="left:18px;top:386px;width:1px;height:181px;background:#716F64"></div>
<div class="a" style="left:131px;top:387px;width:1px;height:17px;background:#fff"></div>
<div class="a" style="left:19px;top:404px;width:347px;height:1px;background:#ACA899"></div>
<div class="a" style="left:130px;top:387px;width:1px;height:18px;background:#ACA899"></div>
<div class="a t" style="left:218px;top:390px;color:#000;transform:scaleY(1.125);transform-origin:0 10px;letter-spacing:-0.333px;">Parameters</div>
<div class="a" style="left:19px;top:405px;width:111px;height:1px;background:#fff"></div>
<div class="a" style="left:19px;top:405px;width:1px;height:17px;background:#fff"></div>
<div class="a" style="left:19px;top:422px;width:112px;height:1px;background:#fff"></div>
<div class="a" style="left:130px;top:405px;width:1px;height:18px;background:#ACA899"></div>
<div class="a" style="left:131px;top:422px;width:235px;height:1px;background:#C8C8C8"></div>
<div class="a t" style="left:21px;top:408px;color:#000;transform:scaleY(1.125);transform-origin:0 10px;letter-spacing:-0.190px;">Select a visualization</div>
<div class="a t" style="left:132px;top:406px;color:#000;transform:scaleY(1.125);transform-origin:0 10px;letter-spacing:-0.417px;">Surface</div>
<div class="a" style="left:19px;top:423px;width:111px;height:1px;background:#fff"></div>
<div class="a" style="left:19px;top:423px;width:1px;height:17px;background:#fff"></div>
<div class="a" style="left:19px;top:440px;width:112px;height:1px;background:#ACA899"></div>
<div class="a" style="left:130px;top:423px;width:1px;height:18px;background:#ACA899"></div>
<div class="a" style="left:131px;top:440px;width:235px;height:1px;background:#C8C8C8"></div>
<div class="a t" style="left:21px;top:426px;color:#000;transform:scaleY(1.125);transform-origin:0 10px;">Z *</div>
<div class="a" style="left:132px;top:423px;width:233px;height:17px;overflow:hidden"><div class="a t" style="left:0;top:1px;transform:scaleY(1.125);transform-origin:0 10px;color:#000;letter-spacing:0.119px;">IDL Tools System/Tools/DAVE Main Tool/Data/305K_sqw</div></div>
<div class="a" style="left:19px;top:441px;width:111px;height:1px;background:#fff"></div>
<div class="a" style="left:19px;top:441px;width:1px;height:17px;background:#fff"></div>
<div class="a" style="left:19px;top:458px;width:112px;height:1px;background:#ACA899"></div>
<div class="a" style="left:130px;top:441px;width:1px;height:18px;background:#ACA899"></div>
<div class="a" style="left:131px;top:458px;width:235px;height:1px;background:#C8C8C8"></div>
<div class="a t" style="left:21px;top:444px;color:#ACA899;transform:scaleY(1.125);transform-origin:0 10px;">X</div>
<div class="a" style="left:132px;top:441px;width:233px;height:17px;overflow:hidden"><div class="a t" style="left:0;top:1px;transform:scaleY(1.125);transform-origin:0 10px;color:#ACA899;letter-spacing:0.119px;">IDL Tools System/Tools/DAVE Main Tool/Data/305K_sqw</div></div>
<div class="a" style="left:19px;top:459px;width:111px;height:1px;background:#fff"></div>
<div class="a" style="left:19px;top:459px;width:1px;height:17px;background:#fff"></div>
<div class="a" style="left:19px;top:476px;width:112px;height:1px;background:#ACA899"></div>
<div class="a" style="left:130px;top:459px;width:1px;height:18px;background:#ACA899"></div>
<div class="a" style="left:131px;top:476px;width:235px;height:1px;background:#C8C8C8"></div>
<div class="a t" style="left:21px;top:462px;color:#ACA899;transform:scaleY(1.125);transform-origin:0 10px;">Y</div>
<div class="a" style="left:132px;top:459px;width:233px;height:17px;overflow:hidden"><div class="a t" style="left:0;top:1px;transform:scaleY(1.125);transform-origin:0 10px;color:#ACA899;letter-spacing:0.119px;">IDL Tools System/Tools/DAVE Main Tool/Data/305K_sqw</div></div>
<div class="a" style="left:19px;top:477px;width:111px;height:1px;background:#fff"></div>
<div class="a" style="left:19px;top:477px;width:1px;height:17px;background:#fff"></div>
<div class="a" style="left:19px;top:494px;width:112px;height:1px;background:#ACA899"></div>
<div class="a" style="left:130px;top:477px;width:1px;height:18px;background:#ACA899"></div>
<div class="a" style="left:131px;top:494px;width:235px;height:1px;background:#C8C8C8"></div>
<div class="a t" style="left:21px;top:480px;color:#ACA899;transform:scaleY(1.125);transform-origin:0 10px;letter-spacing:-0.333px;">VERTEX COLORS</div>
<div class="a" style="left:19px;top:495px;width:111px;height:1px;background:#fff"></div>
<div class="a" style="left:19px;top:495px;width:1px;height:17px;background:#fff"></div>
<div class="a" style="left:19px;top:512px;width:112px;height:1px;background:#ACA899"></div>
<div class="a" style="left:130px;top:495px;width:1px;height:18px;background:#ACA899"></div>
<div class="a" style="left:131px;top:512px;width:235px;height:1px;background:#C8C8C8"></div>
<div class="a t" style="left:21px;top:498px;color:#ACA899;transform:scaleY(1.125);transform-origin:0 10px;">TEXTURE</div>
<div class="a" style="left:19px;top:513px;width:111px;height:1px;background:#fff"></div>
<div class="a" style="left:19px;top:513px;width:1px;height:17px;background:#fff"></div>
<div class="a" style="left:19px;top:530px;width:112px;height:1px;background:#ACA899"></div>
<div class="a" style="left:130px;top:513px;width:1px;height:18px;background:#ACA899"></div>
<div class="a" style="left:131px;top:530px;width:235px;height:1px;background:#C8C8C8"></div>
<div class="a t" style="left:21px;top:516px;color:#ACA899;transform:scaleY(1.125);transform-origin:0 10px;">PALETTE</div>
<div class="a" style="left:131px;top:405px;width:1px;height:17px;background:repeating-linear-gradient(to bottom,#000 0 1px,transparent 1px 2px)"></div>
<div class="a t" style="left:116px;top:572px;color:#000;transform:scaleY(1.125);transform-origin:0 10px;letter-spacing:-0.258px;">* indicates a required parameter</div>
<div class="a" style="left:375px;top:400px;width:350px;height:171px;background:#fff;border:1px solid #000;box-sizing:border-box"></div>
<div class="a t" style="left:443px;top:386px;color:#000;transform:scaleY(1.125);transform-origin:0 10px;letter-spacing:-0.193px;">Parameters:types of the Surface visualization</div>
<div class="a t" style="left:378px;top:402px;color:#ACA899;transform:scaleY(1.125);transform-origin:0 10px;letter-spacing:-0.1px;">Z : IDLARRAY2D</div>
<div class="a t" style="left:378px;top:415px;color:#ACA899;transform:scaleY(1.125);transform-origin:0 10px;letter-spacing:-0.1px;">X : IDLVECTOR, IDLARRAY2D</div>
<div class="a t" style="left:378px;top:428px;color:#ACA899;transform:scaleY(1.125);transform-origin:0 10px;letter-spacing:-0.1px;">Y : IDLVECTOR, IDLARRAY2D</div>
<div class="a t" style="left:378px;top:441px;color:#ACA899;transform:scaleY(1.125);transform-origin:0 10px;letter-spacing:-0.167px;">VERTEX COLORS : IDLVECTOR, IDLARRAY2D</div>
<div class="a t" style="left:378px;top:454px;color:#ACA899;transform:scaleY(1.125);transform-origin:0 10px;letter-spacing:-0.106px;">TEXTURE : IDLARRAY3D, IDLARRAY2D, IDLIMAGEPIXELS</div>
<div class="a t" style="left:378px;top:467px;color:#ACA899;transform:scaleY(1.125);transform-origin:0 10px;letter-spacing:-0.1px;">PALETTE : IDLPALETTE, IDLARRAY2D</div>
<div class="a" style="left:6px;top:595px;width:739px;height:38px;border:1px solid #FAF8EC;box-sizing:border-box"></div>
<div class="a" style="left:7px;top:596px;width:737px;height:36px;border:1px solid #000;box-sizing:border-box"></div>
<div class="a" style="left:8px;top:597px;width:735px;height:34px;border:1px solid #F8F6EA;box-sizing:border-box"></div>
<div class="a t" style="left:13px;top:604px;color:#000;transform:scaleY(1.125);transform-origin:0 10px;letter-spacing:-0.111px;">Visualization Task:</div>
<svg class="a" style="left:157px;top:607px" width="12" height="12" shape-rendering="crispEdges"><rect x="4" y="0" width="4" height="1" fill="#ACA899"/><rect x="2" y="1" width="2" height="1" fill="#ACA899"/><rect x="4" y="1" width="4" height="1" fill="#716F64"/><rect x="8" y="1" width="2" height="1" fill="#ACA899"/><rect x="1" y="2" width="1" height="1" fill="#ACA899"/><rect x="2" y="2" width="2" height="1" fill="#716F64"/><rect x="4" y="2" width="4" height="1" fill="#FFFFFF"/><rect x="8" y="2" width="2" height="1" fill="#716F64"/><rect x="10" y="2" width="1" height="1" fill="#FFFFFF"/><rect x="1" y="3" width="1" height="1" fill="#ACA899"/><rect x="2" y="3" width="1" height="1" fill="#716F64"/><rect x="3" y="3" width="6" height="1" fill="#FFFFFF"/><rect x="9" y="3" width="1" height="1" fill="#F1EFE2"/><rect x="10" y="3" width="1" height="1" fill="#FFFFFF"/><rect x="0" y="4" width="1" height="1" fill="#ACA899"/><rect x="1" y="4" width="1" height="1" fill="#716F64"/><rect x="2" y="4" width="3" height="1" fill="#FFFFFF"/><rect x="5" y="4" width="2" height="1" fill="#000000"/><rect x="7" y="4" width="3" height="1" fill="#FFFFFF"/><rect x="10" y="4" width="1" height="1" fill="#F1EFE2"/><rect x="11" y="4" width="1" height="1" fill="#FFFFFF"/><rect x="0" y="5" width="1" height="1" fill="#ACA899"/><rect x="1" y="5" width="1" height="1" fill="#716F64"/><rect x="2" y="5" width="2" height="1" fill="#FFFFFF"/><rect x="4" y="5" width="4" height="1" fill="#000000"/><rect x="8" y="5" width="2" height="1" fill="#FFFFFF"/><rect x="10" y="5" width="1" height="1" fill="#F1EFE2"/><rect x="11" y="5" width="1" height="1" fill="#FFFFFF"/><rect x="0" y="6" width="1" height="1" fill="#ACA899"/><rect x="1" y="6" width="1" height="1" fill="#716F64"/><rect x="2" y="6" width="2" height="1" fill="#FFFFFF"/><rect x="4" y="6" width="4" height="1" fill="#000000"/><rect x="8" y="6" width="2" height="1" fill="#FFFFFF"/><rect x="10" y="6" width="1" height="1" fill="#F1EFE2"/><rect x="11" y="6" width="1" height="1" fill="#FFFFFF"/><rect x="0" y="7" width="1" height="1" fill="#ACA899"/><rect x="1" y="7" width="1" height="1" fill="#716F64"/><rect x="2" y="7" width="3" height="1" fill="#FFFFFF"/><rect x="5" y="7" width="2" height="1" fill="#000000"/><rect x="7" y="7" width="3" height="1" fill="#FFFFFF"/><rect x="10" y="7" width="1" height="1" fill="#F1EFE2"/><rect x="11" y="7" width="1" height="1" fill="#FFFFFF"/><rect x="1" y="8" width="1" height="1" fill="#ACA899"/><rect x="2" y="8" width="1" height="1" fill="#716F64"/><rect x="3" y="8" width="6" height="1" fill="#FFFFFF"/><rect x="9" y="8" width="1" height="1" fill="#F1EFE2"/><rect x="10" y="8" width="1" height="1" fill="#FFFFFF"/><rect x="1" y="9" width="1" height="1" fill="#FFFFFF"/><rect x="2" y="9" width="2" height="1" fill="#F1EFE2"/><rect x="4" y="9" width="4" height="1" fill="#FFFFFF"/><rect x="8" y="9" width="2" height="1" fill="#F1EFE2"/><rect x="10" y="9" width="1" height="1" fill="#FFFFFF"/><rect x="2" y="10" width="2" height="1" fill="#FFFFFF"/><rect x="4" y="10" width="4" height="1" fill="#F1EFE2"/><rect x="8" y="10" width="2" height="1" fill="#FFFFFF"/><rect x="4" y="11" width="4" height="1" fill="#FFFFFF"/></svg>
<svg class="a" style="left:273px;top:607px" width="12" height="12" shape-rendering="crispEdges"><rect x="4" y="0" width="4" height="1" fill="#ACA899"/><rect x="2" y="1" width="2" height="1" fill="#ACA899"/><rect x="4" y="1" width="4" height="1" fill="#716F64"/><rect x="8" y="1" width="2" height="1" fill="#ACA899"/><rect x="1" y="2" width="1" height="1" fill="#ACA899"/><rect x="2" y="2" width="2" height="1" fill="#716F64"/><rect x="4" y="2" width="4" height="1" fill="#FFFFFF"/><rect x="8" y="2" width="2" height="1" fill="#716F64"/><rect x="10" y="2" width="1" height="1" fill="#FFFFFF"/><rect x="1" y="3" width="1" height="1" fill="#ACA899"/><rect x="2" y="3" width="1" height="1" fill="#716F64"/><rect x="3" y="3" width="6" height="1" fill="#FFFFFF"/><rect x="9" y="3" width="1" height="1" fill="#F1EFE2"/><rect x="10" y="3" width="1" height="1" fill="#FFFFFF"/><rect x="0" y="4" width="1" height="1" fill="#ACA899"/><rect x="1" y="4" width="1" height="1" fill="#716F64"/><rect x="2" y="4" width="8" height="1" fill="#FFFFFF"/><rect x="10" y="4" width="1" height="1" fill="#F1EFE2"/><rect x="11" y="4" width="1" height="1" fill="#FFFFFF"/><rect x="0" y="5" width="1" height="1" fill="#ACA899"/><rect x="1" y="5" width="1" height="1" fill="#716F64"/><rect x="2" y="5" width="8" height="1" fill="#FFFFFF"/><rect x="10" y="5" width="1" height="1" fill="#F1EFE2"/><rect x="11" y="5" width="1" height="1" fill="#FFFFFF"/><rect x="0" y="6" width="1" height="1" fill="#ACA899"/><rect x="1" y="6" width="1" height="1" fill="#716F64"/><rect x="2" y="6" width="8" height="1" fill="#FFFFFF"/><rect x="10" y="6" width="1" height="1" fill="#F1EFE2"/><rect x="11" y="6" width="1" height="1" fill="#FFFFFF"/><rect x="0" y="7" width="1" height="1" fill="#ACA899"/><rect x="1" y="7" width="1" height="1" fill="#716F64"/><rect x="2" y="7" width="8" height="1" fill="#FFFFFF"/><rect x="10" y="7" width="1" height="1" fill="#F1EFE2"/><rect x="11" y="7" width="1" height="1" fill="#FFFFFF"/><rect x="1" y="8" width="1" height="1" fill="#ACA899"/><rect x="2" y="8" width="1" height="1" fill="#716F64"/><rect x="3" y="8" width="6" height="1" fill="#FFFFFF"/><rect x="9" y="8" width="1" height="1" fill="#F1EFE2"/><rect x="10" y="8" width="1" height="1" fill="#FFFFFF"/><rect x="1" y="9" width="1" height="1" fill="#FFFFFF"/><rect x="2" y="9" width="2" height="1" fill="#F1EFE2"/><rect x="4" y="9" width="4" height="1" fill="#FFFFFF"/><rect x="8" y="9" width="2" height="1" fill="#F1EFE2"/><rect x="10" y="9" width="1" height="1" fill="#FFFFFF"/><rect x="2" y="10" width="2" height="1" fill="#FFFFFF"/><rect x="4" y="10" width="4" height="1" fill="#F1EFE2"/><rect x="8" y="10" width="2" height="1" fill="#FFFFFF"/><rect x="4" y="11" width="4" height="1" fill="#FFFFFF"/></svg>
<svg class="a" style="left:389px;top:607px" width="12" height="12" shape-rendering="crispEdges"><rect x="4" y="0" width="4" height="1" fill="#ACA899"/><rect x="2" y="1" width="2" height="1" fill="#ACA899"/><rect x="4" y="1" width="4" height="1" fill="#716F64"/><rect x="8" y="1" width="2" height="1" fill="#ACA899"/><rect x="1" y="2" width="1" height="1" fill="#ACA899"/><rect x="2" y="2" width="2" height="1" fill="#716F64"/><rect x="4" y="2" width="4" height="1" fill="#FFFFFF"/><rect x="8" y="2" width="2" height="1" fill="#716F64"/><rect x="10" y="2" width="1" height="1" fill="#FFFFFF"/><rect x="1" y="3" width="1" height="1" fill="#ACA899"/><rect x="2" y="3" width="1" height="1" fill="#716F64"/><rect x="3" y="3" width="6" height="1" fill="#FFFFFF"/><rect x="9" y="3" width="1" height="1" fill="#F1EFE2"/><rect x="10" y="3" width="1" height="1" fill="#FFFFFF"/><rect x="0" y="4" width="1" height="1" fill="#ACA899"/><rect x="1" y="4" width="1" height="1" fill="#716F64"/><rect x="2" y="4" width="8" height="1" fill="#FFFFFF"/><rect x="10" y="4" width="1" height="1" fill="#F1EFE2"/><rect x="11" y="4" width="1" height="1" fill="#FFFFFF"/><rect x="0" y="5" width="1" height="1" fill="#ACA899"/><rect x="1" y="5" width="1" height="1" fill="#716F64"/><rect x="2" y="5" width="8" height="1" fill="#FFFFFF"/><rect x="10" y="5" width="1" height="1" fill="#F1EFE2"/><rect x="11" y="5" width="1" height="1" fill="#FFFFFF"/><rect x="0" y="6" width="1" height="1" fill="#ACA899"/><rect x="1" y="6" width="1" height="1" fill="#716F64"/><rect x="2" y="6" width="8" height="1" fill="#FFFFFF"/><rect x="10" y="6" width="1" height="1" fill="#F1EFE2"/><rect x="11" y="6" width="1" height="1" fill="#FFFFFF"/><rect x="0" y="7" width="1" height="1" fill="#ACA899"/><rect x="1" y="7" width="1" height="1" fill="#716F64"/><rect x="2" y="7" width="8" height="1" fill="#FFFFFF"/><rect x="10" y="7" width="1" height="1" fill="#F1EFE2"/><rect x="11" y="7" width="1" height="1" fill="#FFFFFF"/><rect x="1" y="8" width="1" height="1" fill="#ACA899"/><rect x="2" y="8" width="1" height="1" fill="#716F64"/><rect x="3" y="8" width="6" height="1" fill="#FFFFFF"/><rect x="9" y="8" width="1" height="1" fill="#F1EFE2"/><rect x="10" y="8" width="1" height="1" fill="#FFFFFF"/><rect x="1" y="9" width="1" height="1" fill="#FFFFFF"/><rect x="2" y="9" width="2" height="1" fill="#F1EFE2"/><rect x="4" y="9" width="4" height="1" fill="#FFFFFF"/><rect x="8" y="9" width="2" height="1" fill="#F1EFE2"/><rect x="10" y="9" width="1" height="1" fill="#FFFFFF"/><rect x="2" y="10" width="2" height="1" fill="#FFFFFF"/><rect x="4" y="10" width="4" height="1" fill="#F1EFE2"/><rect x="8" y="10" width="2" height="1" fill="#FFFFFF"/><rect x="4" y="11" width="4" height="1" fill="#FFFFFF"/></svg>
<div class="a t" style="left:174px;top:608px;color:#000;transform:scaleY(1.125);transform-origin:0 10px;letter-spacing:0.000px;">New</div>
<div class="a t" style="left:290px;top:608px;color:#000;transform:scaleY(1.125);transform-origin:0 10px;letter-spacing:-0.400px;">Modify</div>
<div class="a t" style="left:406px;top:608px;color:#000;transform:scaleY(1.125);transform-origin:0 10px;letter-spacing:-0.750px;">Add</div>
<div class="a" style="left:508px;top:603px;width:108px;height:22px;background:#ECE9D8"></div>
<div class="a" style="left:508px;top:603px;width:108px;height:1px;background:#FFFFFF"></div>
<div class="a" style="left:508px;top:603px;width:1px;height:22px;background:#FFFFFF"></div>
<div class="a" style="left:509px;top:623px;width:106px;height:1px;background:#ACA899"></div>
<div class="a" style="left:614px;top:604px;width:1px;height:20px;background:#ACA899"></div>
<div class="a" style="left:508px;top:624px;width:108px;height:1px;background:#000"></div>
<div class="a" style="left:615px;top:603px;width:1px;height:22px;background:#000"></div>
<div class="a t" style="left:519px;top:608px;color:#000;transform:scaleY(1.125);transform-origin:0 10px;letter-spacing:-0.213px;">New Visualization</div>
<div class="a" style="left:7px;top:639px;width:737px;height:1px;background:#ACA899"></div>
<div class="a" style="left:7px;top:639px;width:1px;height:17px;background:#ACA899"></div>
<div class="a" style="left:7px;top:655px;width:737px;height:1px;background:#FFFFFF"></div>
<div class="a" style="left:743px;top:639px;width:1px;height:17px;background:#FFFFFF"></div>
<div class="a t" style="left:8px;top:641px;color:#000;transform:scaleY(1.125);transform-origin:0 10px;letter-spacing:-0.200px;">Open DAVE 1.x file(s)</div>
<div class="a" style="left:279px;top:49px;width:275px;height:117px;background:#fff;border:1px solid #ACA899;box-sizing:border-box"></div>
<div class="a" style="left:282px;top:52px;width:270px;height:17px;background:#316AC5"></div>
<svg class="a" style="left:544px;top:56px" width="5" height="8" viewBox="0 0 5 8"><path d="M0 0 L4 4 L0 8 Z" fill="#fff"/></svg>
<div class="a t" style="left:298px;top:54px;color:#fff;letter-spacing:-0.031px;">Data Transform</div>
<div class="a t" style="left:299px;top:71px;color:#000;letter-spacing:-0.220px;">1D Peak Fitting (PAN)</div>
<div class="a t" style="left:299px;top:88px;color:#000;letter-spacing:-0.295px;">2D Peak Fitting (RAINS)</div>
<div class="a t" style="left:298px;top:105px;color:#000;letter-spacing:-0.042px;">Fourier Transform Toolkit</div>
<div class="a t" style="left:298px;top:122px;color:#000;letter-spacing:-0.114px;">MagProp: Workup and Analysis of Magnetic Data</div>
<div class="a" style="left:283px;top:140px;width:268px;height:1px;background:#ACA899"></div>
<div class="a t" style="left:298px;top:148px;color:#000;letter-spacing:-0.153px;">Operations Browser</div>
<div class="a" style="left:551px;top:49px;width:94px;height:117px;background:#fff;border:1px solid #ACA899;box-sizing:border-box"></div>
<div class="a t" style="left:570px;top:54px;color:#000;letter-spacing:-0.750px;">Scale</div>
<div class="a t" style="left:570px;top:71px;color:#000;letter-spacing:0.480px;">Offset</div>
<div class="a t" style="left:570px;top:88px;color:#ACA899;letter-spacing:-0.250px;">Transpose</div>
<div class="a t" style="left:570px;top:105px;color:#ACA899;letter-spacing:0.000px;">Rebin</div>
<div class="a" style="left:555px;top:123px;width:87px;height:1px;background:#ACA899"></div>
<div class="a t" style="left:570px;top:131px;color:#ACA899;letter-spacing:0.000px;">Subtract</div>
<div class="a t" style="left:570px;top:148px;color:#ACA899;letter-spacing:-1.000px;">Sum</div>
</body></html>
